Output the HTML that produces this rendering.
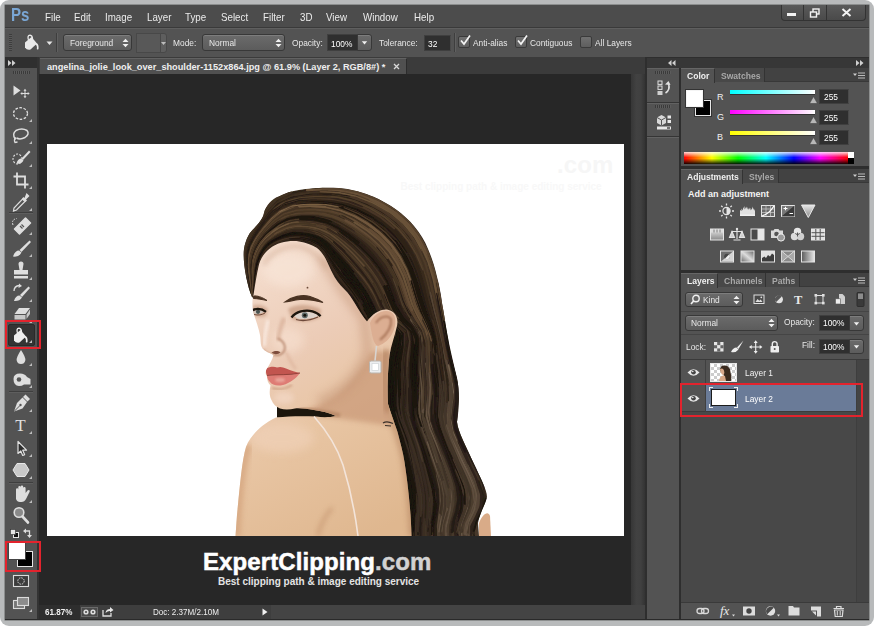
<!DOCTYPE html>
<html><head><meta charset="utf-8"><title>Photoshop</title>
<style>
*{box-sizing:border-box;margin:0;padding:0}
html,body{width:874px;height:626px;overflow:hidden;background:#fff}
body{font-family:"Liberation Sans","DejaVu Sans",sans-serif;font-size:10px;color:#e6e6e6;position:relative}
.a{position:absolute}
.t{position:absolute;white-space:nowrap;transform-origin:0 50%;transform:scaleX(.93);line-height:12px;font-size:9px;color:#e8e8e8}
.b{font-weight:bold}
#frame{left:0;top:0;width:874px;height:626px;background:#b8babb;border-radius:9px}
#win{left:5px;top:5px;width:864px;height:615px;background:#535353;overflow:hidden;box-shadow:0 0 0 .5px rgba(40,40,40,.6)}
/* everything inside #win positioned using page coords minus 5 -> use wrapper shift */
#w{position:absolute;left:-5px;top:-5px;width:874px;height:626px}
#menubar{left:5px;top:5px;width:864px;height:23px;background:#4c4c4c;border-bottom:1px solid #3a3a3a}
.mi{position:absolute;top:10px;font-size:10.5px;line-height:14px;color:#ebebeb;white-space:nowrap;transform-origin:0 50%;transform:scaleX(.93)}
#ps{left:11px;top:5px;font-size:17.5px;line-height:21px;font-weight:bold;color:#7aa6d4;position:absolute;transform-origin:0 50%;transform:scaleX(.86)}
#optbar{left:5px;top:28px;width:864px;height:30px;background:#535353;border-top:1px solid #5f5f5f;border-bottom:1px solid #2f2f2f}
.dd{position:absolute;background:linear-gradient(#6b6b6b,#5c5c5c);border:1px solid #383838;border-radius:3px;box-shadow:inset 0 1px 0 #7d7d7d}
.fld{position:absolute;background:#2f2f2f;border:1px solid #3f3f3f;border-right-color:#4a4a4a}
.cb{position:absolute;width:12px;height:12px;background:linear-gradient(#707070,#5e5e5e);border:1px solid #3a3a3a;border-radius:2px}
.ud{position:absolute;width:7px;height:10px}
</style></head><body>
<div id="frame" class="a"></div>
<div id="win" class="a"><div id="w">
  <div id="menubar" class="a"></div>
  <div id="ps">Ps</div>
  <div class="mi" style="left:45px">File</div>
  <div class="mi" style="left:74px">Edit</div>
  <div class="mi" style="left:105px">Image</div>
  <div class="mi" style="left:147px">Layer</div>
  <div class="mi" style="left:185px">Type</div>
  <div class="mi" style="left:221px">Select</div>
  <div class="mi" style="left:263px">Filter</div>
  <div class="mi" style="left:300px">3D</div>
  <div class="mi" style="left:326px">View</div>
  <div class="mi" style="left:363px">Window</div>
  <div class="mi" style="left:414px">Help</div>
  <!-- window buttons -->
  <div class="a" style="left:781px;top:5px;width:85px;height:16px;background:linear-gradient(#5a5a5a,#4a4a4a);border:1px solid #333;border-top:none;border-radius:0 0 4px 4px"></div>
  <div class="a" style="left:803px;top:5px;width:1px;height:15px;background:#333"></div>
  <div class="a" style="left:826px;top:5px;width:1px;height:15px;background:#333"></div>
  <div class="a" style="left:787px;top:13px;width:9px;height:3px;background:#f2f2f2"></div>
  <svg class="a" style="left:809px;top:8px" width="12" height="10" viewBox="0 0 12 10"><rect x="4" y="1" width="6" height="5" fill="none" stroke="#f2f2f2" stroke-width="1.4"/><rect x="1.5" y="4" width="6" height="5" fill="#4e4e4e" stroke="#f2f2f2" stroke-width="1.4"/></svg>
  <svg class="a" style="left:841px;top:8px" width="11" height="9" viewBox="0 0 11 9"><path d="M1.5 1 L9.5 8 M9.5 1 L1.5 8" stroke="#f4f4f4" stroke-width="1.9"/></svg>

  <div id="optbar" class="a"></div>
  <!-- options content -->
  <div class="a" style="left:9px;top:34px;width:3px;height:17px;background:repeating-linear-gradient(#3d3d3d 0 1px,#5a5a5a 1px 2px)"></div>
  <svg class="a" style="left:22.300px;top:34px" width="20" height="18" viewBox="0 0 20 18">
    <path d="M3 8.5 L9.5 3 L15 9.5 L8.5 15.5 Q5 16.5 3 13.5 Z" fill="#e9e9e9"/>
    <path d="M6.5 6 Q5 1.5 8 1.2 Q10.5 1.5 10.5 5" fill="none" stroke="#e9e9e9" stroke-width="1.3"/>
    <path d="M14.5 9 Q17 10 16.5 15 Q15.6 16.2 14.8 15 Q15.5 11.5 13 10 Z" fill="#e9e9e9"/>
  </svg>
  <svg class="a" style="left:46px;top:40.500px" width="7" height="5" viewBox="0 0 7 5"><path d="M0.500 0.500H6.500L3.500 4Z" fill="#e6e6e6"/></svg>
  <div class="a" style="left:56px;top:33px;width:1px;height:19px;background:#3e3e3e;box-shadow:1px 0 0 #606060"></div>
  <div class="dd" style="left:63px;top:34px;width:69px;height:17px"></div>
  <div class="t" style="left:70px;top:37px">Foreground</div>
  <svg class="ud" style="left:122px;top:38px" viewBox="0 0 7 10"><path d="M0.5 4L3.5 0.8L6.5 4ZM0.5 6L3.5 9.2L6.5 6Z" fill="#f0f0f0"/></svg>
  <div class="a" style="left:136px;top:33px;width:25px;height:20px;background:#585858;border:1px solid #484848"></div>
  <div class="a" style="left:160px;top:33px;width:7px;height:20px;background:#5e5e5e;border:1px solid #484848;border-radius:0 3px 3px 0"></div>
  <svg class="a" style="left:161px;top:42px" width="5" height="3" viewBox="0 0 5 3"><path d="M0 0H5L2.5 3Z" fill="#bdbdbd"/></svg>
  <div class="t" style="left:173px;top:37px">Mode:</div>
  <div class="dd" style="left:202px;top:34px;width:83px;height:17px"></div>
  <div class="t" style="left:209px;top:37px">Normal</div>
  <svg class="ud" style="left:275px;top:38px" viewBox="0 0 7 10"><path d="M0.5 4L3.5 0.8L6.5 4ZM0.5 6L3.5 9.2L6.5 6Z" fill="#f0f0f0"/></svg>
  <div class="t" style="left:292px;top:37px">Opacity:</div>
  <div class="fld" style="left:327px;top:34px;width:31px;height:17px"></div>
  <div class="t" style="left:331px;top:38px;color:#fff">100%</div>
  <div class="dd" style="left:357px;top:34px;width:15px;height:17px;border-radius:0 3px 3px 0"></div>
  <svg class="a" style="left:361px;top:41px" width="7" height="4" viewBox="0 0 7 4"><path d="M0.800 0.300H6.200L3.500 3.500Z" fill="#f0f0f0"/></svg>
  <div class="t" style="left:379px;top:37px">Tolerance:</div>
  <div class="fld" style="left:424px;top:35px;width:27px;height:16px"></div>
  <div class="t" style="left:428px;top:38px;color:#fff">32</div>
  <div class="a" style="left:454px;top:33px;width:1px;height:19px;background:#3e3e3e;box-shadow:1px 0 0 #606060"></div>
  <div class="cb" style="left:458px;top:36px"></div>
  <svg class="a" style="left:459px;top:34px" width="13" height="12" viewBox="0 0 13 12"><path d="M2 6.5L5 10L11 1.5" fill="none" stroke="#f4f4f4" stroke-width="1.7"/></svg>
  <div class="t" style="left:473px;top:37px">Anti-alias</div>
  <div class="cb" style="left:515px;top:36px"></div>
  <svg class="a" style="left:516px;top:34px" width="13" height="12" viewBox="0 0 13 12"><path d="M2 6.5L5 10L11 1.5" fill="none" stroke="#f4f4f4" stroke-width="1.7"/></svg>
  <div class="t" style="left:530px;top:37px">Contiguous</div>
  <div class="cb" style="left:580px;top:36px"></div>
  <div class="t" style="left:595px;top:37px">All Layers</div>
  <!-- document area -->
  <div class="a" style="left:37px;top:57px;width:610px;height:562px;background:#2b2b2b"></div>
  <div class="a" style="left:39px;top:57px;width:606px;height:17px;background:#3b3b3b"></div>
  <div class="a" style="left:39px;top:74px;width:606px;height:531px;background:#272727"></div>
  <!-- doc tab -->
  <div class="a" style="left:40px;top:58px;width:367px;height:16px;background:#505050;border-top:1px solid #626262;border-right:1px solid #2c2c2c"></div>
  <div class="t b" style="left:47px;top:61px;font-size:9.2px;transform:none;color:#eee">angelina_jolie_look_over_shoulder-1152x864.jpg @ 61.9% (Layer 2, RGB/8#) *</div>
  <svg class="a" style="left:393px;top:63px" width="7" height="7" viewBox="0 0 7 7"><path d="M1 1L6 6M6 1L1 6" stroke="#d8d8d8" stroke-width="1.3"/></svg>
  <!-- vertical scrollbar -->
  <div class="a" style="left:631px;top:74px;width:14px;height:531px;background:linear-gradient(90deg,#363636,#424242 40%,#404040 70%,#333)"></div>
  <!-- status bar -->
  <div class="a" style="left:39px;top:605px;width:606px;height:14px;background:#444"></div>
  <div class="a" style="left:39px;top:605px;width:232px;height:14px;background:#3e3e3e"></div><div class="a" style="left:39px;top:605px;width:41px;height:14px;background:#2e2e2e"></div>
  <div class="t b" style="left:45px;top:606px;font-size:8.5px;transform:scaleX(.95);color:#f0f0f0">61.87%</div>
  <div class="a" style="left:81px;top:607px;width:17px;height:10px;background:#4a4a4a;border:1px solid #6a6a6a"></div>
  <svg class="a" style="left:82px;top:608px" width="15" height="8" viewBox="0 0 15 8"><circle cx="4" cy="4" r="2.6" fill="#ddd"/><circle cx="11" cy="4" r="2.6" fill="#ddd"/><circle cx="4" cy="4" r="1" fill="#444"/><circle cx="11" cy="4" r="1" fill="#444"/></svg>
  <svg class="a" style="left:102px;top:606px" width="12" height="11" viewBox="0 0 12 11"><path d="M1 4V10H9V7" fill="none" stroke="#ddd" stroke-width="1.3"/><path d="M3.5 7Q4 3 8 3V1L11.5 4L8 6.5V5Q5.5 5 3.5 7Z" fill="#e6e6e6"/></svg>
  <div class="t" style="left:153px;top:606px;font-size:8.5px;transform:scaleX(.95);color:#eee">Doc: 2.37M/2.10M</div>
  <svg class="a" style="left:262px;top:608px" width="6" height="8" viewBox="0 0 6 8"><path d="M0.5 0.5V7.5L5.5 4Z" fill="#f0f0f0"/></svg>
  <!-- canvas -->
  <div class="a" style="left:47px;top:144px;width:577px;height:392px;background:#fff;overflow:hidden" id="canvas">
<svg class="a" style="left:0;top:0" width="577" height="392" viewBox="47 144 577 392">
  <defs>
    <linearGradient id="hairg" gradientUnits="userSpaceOnUse" x1="250" y1="200" x2="480" y2="520"><stop offset="0" stop-color="#3f3020"/><stop offset=".3" stop-color="#30251b"/><stop offset=".6" stop-color="#2a2019"/><stop offset="1" stop-color="#46382b"/></linearGradient>
    <linearGradient id="sking" gradientUnits="userSpaceOnUse" x1="250" y1="250" x2="400" y2="520"><stop offset="0" stop-color="#f5dfd0"/><stop offset=".35" stop-color="#ecccb7"/><stop offset=".6" stop-color="#e8c5a3"/><stop offset="1" stop-color="#dfb78f"/></linearGradient>
    <filter id="b1" x="-20%" y="-20%" width="140%" height="140%"><feGaussianBlur stdDeviation="1"/></filter>
    <filter id="b15" x="-30%" y="-30%" width="160%" height="160%"><feGaussianBlur stdDeviation="1.600"/></filter>
    <filter id="b2" x="-30%" y="-30%" width="160%" height="160%"><feGaussianBlur stdDeviation="2.500"/></filter>
    <filter id="b4" x="-40%" y="-40%" width="180%" height="180%"><feGaussianBlur stdDeviation="5"/></filter>
    <filter id="b05" x="-10%" y="-10%" width="120%" height="120%"><feGaussianBlur stdDeviation=".55"/></filter>
    <clipPath id="hairclip"><path id="hairp" d="M252 297C247 285 242.500 262 244 249C246 238 250 232 254 228.500C258 224 263 219 264 213C266 205 272 199 278.500 196.500C285 193 292 191 299 190C308 188.500 318 187.700 324.500 187.700C333 187.500 341 188 347.500 189C356 190.500 366 193.500 373 196.500C381 200 389 204.500 396 209.500C403 214.500 409 220 414 226C420 233 425 241 428 249C432 258 435 268 437 277C439.500 286 441 295 442 303C444 313 445.500 324 447.200 333.500C450 350 454 365 457 378C460 392 459 410 457 422C458 432 466 446 474 464C480 477 487 490 487 497C486 503 480 512 478 523L479 536H408C408 515 407 492 402 460C398 440 390 425 384 408L336 420L277 417.500L277 406L290 400L290 330Z"/></clipPath>
    <clipPath id="skinclip"><path id="skinp" d="M259 264.500C262 254 270 246 281 242.700C287 241 294 240.500 299 241.400C306 242.500 312 244.500 316.700 247.800C321 251 324.500 256 327 261.800C330 268 332 273 334.600 277.200C338 283 343 288 347.400 292.500C351 297 354.500 303 357.600 308C361 313.500 364 318 367 321.500C372 314 380 309 387 309.500C396 311.500 398.500 318 397 326C395 336 391 345 389.500 355C388 368 387 390 388 404C391 414 395 424 397.500 432C400 442 403 452 404.500 462C409 492 411 515 411.500 536H235.500L237 515C240 485 242 460 246 447C250 436 262 424 276 417.500C290 416 303 416 316 416.500C322 417.500 330 417.500 336 416C330 413 322 411 314 410C307 409 300 408 295 408.500C290 409.500 285 410 280 408.500C276 407 273 404 271.500 400C269 396 269.500 390 270.500 385.500C268 383 267 380 267 376.500C265 374 265.500 371 267 368.500C270 364 272.500 359 273.500 355C270 353 265 351.500 262.500 348.500C260 345 261 340 260 335C259 329 256 321 253.500 313C252 306 252 300 253.500 295C255 285 256.500 275 259 264.500Z"/></clipPath>
  </defs>
  <g filter="url(#b05)">
    <!-- hair -->
    <use href="#hairp" fill="url(#hairg)"/>
    <g clip-path="url(#hairclip)">
      <!--HAIRSTART--><g fill="none" stroke-linecap="round" stroke-linejoin="round" filter="url(#b05)">
<path d="M257.1 270.2L259.2 264.0L262.2 257.2L266.4 250.6L271.8 246.0L278.5 243.4L286.7 241.7L296.0 241.1L305.7 242.6L314.7 246.4L321.3 252.2L326.0 259.3" stroke="#2e2218" stroke-width="1.2"/>
<path d="M331.1 268.4L335.3 276.0L340.8 283.7L347.1 291.4L353.2 299.2L358.4 307.2L362.9 315.4L370.4 321.6L383.5 324.6L394.1 329.6" stroke="#30241a" stroke-width="1.9"/>
<path d="M395.2 335.1L391.9 350.7L388.1 367.9L387.7 383.1L388.1 395.1L388.2 404.7L390.3 415.1L394.6 427.6L399.3 441.8L402.8 456.8L405.3 472.2L407.9 487.3L409.7 501.3L410.7 513.8" stroke="#1a130e" stroke-width="1.5"/>
<path d="M255.1 278.5L256.7 271.1L258.6 264.8L261.5 258.1L265.6 251.4L270.9 246.5L277.4 243.6L285.3 241.6L294.4 240.5L304.2 241.5" stroke="#3c2d1f" stroke-width="2.0"/>
<path d="M302.4 240.9L311.9 243.7L319.7 248.9L325.0 256.0L328.9 263.7L332.9 271.3L338.0 278.7" stroke="#261d14" stroke-width="1.2"/>
<path d="M336.2 276.7L342.3 284.1L348.6 291.7L354.4 299.8L359.1 308.3L363.4 316.4L371.6 322.1L385.3 325.0" stroke="#211812" stroke-width="2.2"/>
<path d="M376.6 323.4L389.9 326.5L395.0 335.4L391.7 351.1L388.8 368.3L389.1 383.5L389.3 395.4L388.8 405.0L390.4 415.3L394.7 427.9" stroke="#1f1711" stroke-width="2.2"/>
<path d="M401.5 450.3L404.4 465.6L407.5 480.9L410.5 495.5L412.3 508.7L412.9 520.4L412.5 530.9" stroke="#1a130e" stroke-width="2.8"/>
<path d="M255.8 274.6L257.5 267.9L259.7 261.5L263.1 254.5L267.7 248.4L273.6 244.5L280.8 242.2" stroke="#36291c" stroke-width="1.4"/>
<path d="M275.3 244.0L282.9 241.9L291.8 240.7L301.5 241.1L311.1 243.8L319.0 248.7L324.5 255.3L328.7 262.7L332.7 270.3L337.4 278.0L343.2 285.7L349.6 293.4" stroke="#2b2017" stroke-width="1.4"/>
<path d="M354.3 297.2L359.6 305.5L363.7 314.0L370.3 320.8L382.8 324.2L394.3 328.9L395.5 340.8L391.6 357.6L390.1 374.2L390.5 388.4L390.0 399.2L390.0 408.7L392.8 419.9L397.6 433.1" stroke="#1a130e" stroke-width="2.7"/>
<path d="M395.5 427.8L400.5 441.9L404.6 456.9L407.7 472.2L409.9 487.4L410.9 501.3L411.4 513.9L411.8 525.0L412.3 535.0" stroke="#1a130e" stroke-width="1.9"/>
<path d="M254.7 279.7L256.2 271.8L258.0 265.4L260.6 258.7L264.4 251.8L269.5 246.4L275.8 243.1L283.6 240.9L292.6 239.6L302.5 240.1" stroke="#392b1e" stroke-width="1.8"/>
<path d="M313.4 243.4L320.9 248.9L326.1 256.0L330.2 263.7L334.5 271.4L340.0 278.8L346.5 286.3L353.1 294.1L358.7 302.4L362.9 311.1L368.1 318.8L378.9 323.3L391.9 326.9L396.8 336.3" stroke="#34271b" stroke-width="2.6"/>
<path d="M391.4 357.8L390.2 374.4L391.3 388.6L391.6 399.5L391.9 409.1L394.4 420.3L398.4 433.4L402.3 447.8L406.0 463.0L409.8 478.4L412.7 493.2L413.9 506.6" stroke="#1a130e" stroke-width="2.7"/>
<path d="M256.0 271.5L257.8 265.0L260.4 258.3L264.2 251.4L269.4 246.0L275.8 242.6L283.6 240.4" stroke="#34271b" stroke-width="2.2"/>
<path d="M283.5 240.4L292.6 239.0L302.6 239.5L312.4 242.4L320.4 247.4L326.0 254.0L330.7 261.3L335.3 268.9L340.7 276.6L346.9 284.6L353.2 292.6L358.9 300.9" stroke="#1a130e" stroke-width="1.5"/>
<path d="M368.0 316.7L377.3 322.2L390.3 325.7L397.2 333.4L394.6 348.1L391.0 365.3L391.3 380.9L392.4 393.7L392.4 403.7L393.5 413.9L396.9 426.0" stroke="#1a130e" stroke-width="1.9"/>
<path d="M395.5 421.2L400.5 434.5L404.3 448.8L407.0 463.9L409.3 479.2L411.3 493.9L413.0 507.2L414.1 519.1L414.6 529.7L414.7 539.2" stroke="#1a130e" stroke-width="1.9"/>
<path d="M252.3 293.1L254.1 281.4L255.6 273.0L257.1 266.3L259.5 259.7L263.1 252.7L267.9 246.8L274.1 243.0L281.6 240.5" stroke="#32251a" stroke-width="2.5"/>
<path d="M292.5 238.5L302.5 238.9L312.5 241.8L320.5 247.0L326.2 253.9L330.8 261.2L335.7 268.5L341.3 276.1L347.8 283.9L354.1 292.1L359.6 300.6" stroke="#302419" stroke-width="1.5"/>
<path d="M364.5 309.3L369.5 317.5L379.7 322.6L392.8 326.5L399.0 335.5L396.2 350.8L392.6 367.8L391.9 383.0L391.8 395.2L391.8 405.0L394.3 415.6L399.3 428.2L404.0 442.1L407.4 456.7" stroke="#1a130e" stroke-width="2.2"/>
<path d="M405.7 453.6L409.7 468.8L413.0 484.1L414.8 498.4L415.0 511.2L414.5 522.6L414.3 532.8" stroke="#1a130e" stroke-width="1.5"/>
<path d="M255.8 271.3L257.6 264.8L260.3 258.1L264.2 251.2L269.3 245.7L275.7 242.3L283.4 239.7L292.5 238.2L302.6 238.6L312.6 241.6L320.7 246.7L326.5 253.3" stroke="#372a1d" stroke-width="2.6"/>
<path d="M334.1 264.6L339.5 272.1L345.8 279.9L352.2 288.1L358.1 296.5L363.1 305.3" stroke="#291f16" stroke-width="1.6"/>
<path d="M369.6 315.8L378.4 321.8L391.3 325.6L398.6 333.3L397.1 347.9L393.9 365.0" stroke="#1a130e" stroke-width="1.2"/>
<path d="M392.3 390.2L391.9 400.8L393.0 410.6L397.1 422.4L402.3 435.8L406.4 450.2L409.3 465.1L411.7 480.4L413.4 495.0L414.6 508.2" stroke="#1a130e" stroke-width="1.5"/>
<path d="M416.1 508.3L416.9 520.0L417.0 530.5" stroke="#1c150f" stroke-width="1.7"/>
<path d="M255.6 271.5L257.2 264.9L259.8 258.2L263.7 251.3L268.8 245.8L275.1 242.2L282.8 239.5L291.8 237.6" stroke="#36281c" stroke-width="2.4"/>
<path d="M290.1 238.4L300.0 238.0L310.2 240.0L319.1 244.4L325.4 250.8L330.3 258.4L335.0 266.1L340.5 273.7L347.0 281.4L353.9 289.3L359.9 297.6" stroke="#1e1610" stroke-width="2.3"/>
<path d="M363.7 304.8L368.2 313.6L375.5 320.5L388.1 324.5L397.9 330.6L397.3 343.5L393.2 360.3L392.6 376.6L393.8 390.4L394.0 401.1L394.6 411.0L397.4 422.5L401.4 435.7" stroke="#1a130e" stroke-width="2.6"/>
<path d="M401.8 436.2L405.2 450.5L408.4 465.6L412.0 480.9L415.1 495.5L416.6 508.6L416.5 520.3L415.8 530.7" stroke="#1d1510" stroke-width="1.8"/>
<path d="M252.4 291.8L254.0 280.4L255.4 272.1L257.0 265.4L259.5 258.8L263.2 251.8L268.1 246.0L274.3 242.1L281.9 239.3" stroke="#433323" stroke-width="1.8"/>
<path d="M290.0 237.7L300.0 237.5L310.4 239.7L319.3 244.0L325.8 250.2L331.0 257.3L336.1 264.8" stroke="#2b2017" stroke-width="1.3"/>
<path d="M341.4 271.4L347.8 279.3L354.3 287.7L360.2 296.3L365.1 305.2L369.7 314.1L377.8 320.7L390.6 324.9" stroke="#1a130e" stroke-width="1.4"/>
<path d="M397.0 328.6L398.8 339.9L394.6 356.2L392.9 372.9L394.0 387.3L394.7 398.7L395.1 408.6L397.5 419.7L401.4 432.6L405.1 446.6L408.5 461.5L412.3 476.8L415.7 491.7L417.4 505.2" stroke="#1a130e" stroke-width="2.2"/>
<path d="M416.9 514.1L416.2 525.2L415.7 535.2" stroke="#3a2e24" stroke-width="2.4"/>
<path d="M253.7 282.2L255.0 273.4L256.5 266.5L258.7 259.9L262.1 252.8L266.8 246.6" stroke="#2b2017" stroke-width="1.6"/>
<path d="M274.1 241.5L281.7 238.5L290.7 236.5L300.9 236.3L311.5 238.7L320.4 243.3L326.9 249.5L332.4 256.6L338.0 264.1L344.0 271.9L350.6 280.1L357.1 288.6L362.9 297.4L367.6 306.5" stroke="#1a130e" stroke-width="2.2"/>
<path d="M371.3 314.8L380.0 321.2L392.9 325.5L401.0 333.4L399.6 347.8L395.8 364.7L394.8 380.3L394.8 393.2L394.6 403.5L396.4 413.8L401.1 426.1L406.1 439.7L409.8 454.0L412.5 468.9" stroke="#1a130e" stroke-width="2.2"/>
<path d="M416.6 494.0L417.2 507.3L417.5 519.1L417.8 529.6L418.6 539.2" stroke="#34291f" stroke-width="1.9"/>
<path d="M253.7 281.7L254.9 273.0L256.4 266.0L258.6 259.4L262.2 252.3L267.0 246.3L273.1 242.2L280.5 239.2L289.2 236.9L299.1 236.1" stroke="#433223" stroke-width="2.7"/>
<path d="M305.4 236.9L315.5 240.3L323.3 245.9L329.2 252.7L334.6 260.0L340.3 267.5L346.8 275.3L353.5 283.6L359.7 292.2L364.9 301.2L369.2 310.5L375.4 318.4" stroke="#1a130e" stroke-width="2.5"/>
<path d="M372.5 315.7L382.1 321.7L394.8 326.2L401.6 335.1L398.9 350.0L395.1 366.8" stroke="#1a130e" stroke-width="1.9"/>
<path d="M394.6 366.9L395.0 382.3L396.1 394.9L396.5 405.1L398.2 415.6L401.8 427.9L405.6 441.5L408.9 455.9L412.5 471.0L416.2 486.2L418.8 500.3L419.4 512.9L418.8 524.0L418.0 534.1" stroke="#241c15" stroke-width="2.0"/>
<path d="M254.7 272.8L256.1 265.9L258.4 259.3L261.9 252.2L266.7 246.0L272.7 241.7L280.0 238.4L288.8 235.9L298.9 235.2L309.7 237.1" stroke="#34271c" stroke-width="2.7"/>
<path d="M314.6 239.6L322.8 244.8L328.9 251.4L334.4 258.6L340.1 266.2L346.4 274.2L353.1 282.5L359.4 291.1" stroke="#1a130e" stroke-width="1.4"/>
<path d="M367.6 304.2L372.3 313.3L380.4 320.4L392.8 325.0L401.3 332.4L399.8 346.1L395.8 362.9L395.4 378.8L396.6 392.2L397.1 402.8" stroke="#1a130e" stroke-width="2.0"/>
<path d="M396.7 412.1L400.1 423.9L404.9 437.3L409.5 451.6L413.5 466.4L416.9 481.7L418.9 496.2L418.9 509.2L418.3 520.8L418.1 531.1" stroke="#392d23" stroke-width="2.6"/>
<path d="M255.7 267.3L257.8 260.7L261.0 253.6L265.4 247.1L271.1 242.3L278.2 238.9L286.7 236.3L296.5 235.1L307.3 236.3L317.4 239.8L325.1 245.3L331.1 252.0L336.9 259.5L342.9 267.3" stroke="#281e15" stroke-width="2.0"/>
<path d="M353.3 279.4L360.0 288.0L366.0 296.9L370.8 306.3L375.9 315.3L385.5 321.6" stroke="#1a130e" stroke-width="1.6"/>
<path d="M400.0 329.5L402.2 341.6L398.6 358.0L396.7 374.3L396.6 388.5L396.2 399.6L396.9 409.6L400.5 421.2L405.7 434.3L410.1 448.3L413.2 462.8L415.8 478.0" stroke="#1a130e" stroke-width="2.6"/>
<path d="M419.3 496.1L420.6 509.1L420.4 520.6L419.6 531.0" stroke="#352a20" stroke-width="2.7"/>
<path d="M252.5 289.6L253.8 278.6L255.0 270.5L256.6 263.8L259.3 257.0L263.1 250.0L268.3 244.4L274.7 240.4L282.4 237.3L291.6 235.2" stroke="#2a1f16" stroke-width="2.5"/>
<path d="M310.6 236.5L320.1 240.7L327.2 246.9L332.9 254.2L338.6 262.0L344.9 269.8L351.9 277.8L358.9 286.1L365.1 295.0L369.8 304.5L374.1 313.9L382.5 320.8" stroke="#1a130e" stroke-width="1.9"/>
<path d="M394.4 324.9L402.6 332.6L402.4 346.6L399.5 363.3L399.0 379.1L399.1 392.4L398.2 402.9L399.0 413.2L403.0 425.3" stroke="#1a130e" stroke-width="2.4"/>
<path d="M409.6 443.8L412.6 458.0L415.3 473.0L418.1 488.1L420.1 502.1L421.0 514.4" stroke="#3b2f24" stroke-width="2.4"/>
<path d="M253.9 276.7L255.0 268.9L256.8 262.3L259.7 255.3L263.9 248.4L269.3 243.1L275.9 239.3L284.0 236.2L293.5 234.3L304.3 234.7L315.0 237.7L323.5 242.8L330.0 249.3L336.0 256.5" stroke="#1a130e" stroke-width="2.1"/>
<path d="M345.4 267.6L352.1 275.9L358.8 284.6L365.0 293.5L370.1 302.9L374.7 312.4L382.6 319.8" stroke="#1a130e" stroke-width="1.9"/>
<path d="M396.7 326.1L403.5 335.1L401.8 350.0L398.7 366.7L398.2 382.1L398.0 394.7L397.7 404.9L399.7 415.6L404.5 428.1L409.6 441.7" stroke="#362b21" stroke-width="2.5"/>
<path d="M413.8 458.4L417.7 473.4L420.6 488.5L421.5 502.4L420.9 514.7L420.3 525.6L420.5 535.5" stroke="#3d3025" stroke-width="1.8"/>
<path d="M253.2 283.1L254.3 273.8L255.6 266.6L257.6 259.9L260.9 252.8L265.4 246.3L271.3 241.6L278.5 238.2L287.1 235.5L297.1 234.2L308.0 235.4L318.2 238.8L326.0 244.3" stroke="#251b13" stroke-width="1.9"/>
<path d="M321.3 240.7L328.3 247.1L334.2 254.3L340.4 261.8L347.1 269.6L354.2 277.7L361.0 286.4L366.7 295.6L371.1 305.4" stroke="#1a130e" stroke-width="2.3"/>
<path d="M374.9 310.5L382.0 318.6L393.6 324.0L403.0 331.1L403.1 344.0L399.2 360.5L398.4 376.6L399.7 390.5L400.2 401.6" stroke="#1a130e" stroke-width="1.9"/>
<path d="M401.0 400.6L401.0 410.7L403.5 422.2L407.7 435.2L411.8 449.0L415.8 463.5L420.1 478.7L423.3 493.5L424.0 506.8L423.0 518.5" stroke="#342920" stroke-width="2.6"/>
<path d="M421.2 518.1L420.5 528.7L420.9 538.4" stroke="#241b15" stroke-width="2.6"/>
<path d="M253.4 280.5L254.4 271.8L255.7 264.8L258.1 258.0L261.7 250.9L266.7 244.9L272.9 240.6L280.3 237.2L289.2 234.4L299.5 233.5L310.7 235.2L320.4 239.4L327.7 245.6" stroke="#1a130e" stroke-width="1.9"/>
<path d="M333.8 251.7L340.0 259.4L346.4 267.6L353.3 276.0L360.1 284.6L366.4 293.6L371.5 303.1" stroke="#1a130e" stroke-width="1.3"/>
<path d="M377.7 315.1L387.5 321.5L399.3 327.0L404.5 337.1L401.5 352.3L398.4 368.9L398.6 384.0L399.3 396.3L399.9 406.6L402.4 417.6" stroke="#1a130e" stroke-width="2.2"/>
<path d="M404.1 425.8L408.8 439.1L413.2 453.2L417.4 467.9L421.2 483.1L423.2 497.6L423.0 510.4L421.9 521.7" stroke="#362a21" stroke-width="1.5"/>
<path d="M423.4 514.6L422.2 525.6L421.5 535.5" stroke="#2a2019" stroke-width="2.4"/>
<path d="M253.0 283.6L254.0 274.1L255.2 266.7L257.1 260.0L260.3 252.8L264.8 246.2L270.6 241.3L277.8 237.7L286.3 234.7L296.2 233.2L307.4 233.9L317.9 237.1" stroke="#1a130e" stroke-width="2.2"/>
<path d="M327.3 244.0L333.8 250.8L340.1 258.3L346.7 266.5L353.6 274.9L360.4 283.7L366.6 292.7L371.8 302.2L376.4 311.9" stroke="#1a130e" stroke-width="1.4"/>
<path d="M381.4 317.3L392.5 323.2L402.7 329.7L404.4 341.8L400.6 358.0L399.1 374.3L400.1 388.6" stroke="#1a130e" stroke-width="2.7"/>
<path d="M401.7 395.3L401.0 405.6L402.0 416.2L405.8 428.6L410.5 442.1L414.8 456.2L419.1 471.1" stroke="#392d23" stroke-width="1.6"/>
<path d="M417.0 464.8L421.2 480.0L424.1 494.7L424.4 507.9L423.2 519.5L422.2 529.9L422.6 539.6" stroke="#342920" stroke-width="1.5"/>
<path d="M251.8 294.0L253.0 281.5L253.9 272.4L255.1 265.2L257.2 258.3L260.6 251.1L265.4 244.7L271.5 240.1L278.8 236.4L287.6 233.3L297.9 231.8" stroke="#1a130e" stroke-width="2.7"/>
<path d="M295.7 232.6L306.9 233.5L317.6 236.9L325.8 242.3L332.5 248.9L338.9 256.2L345.7 264.0L352.9 272.3" stroke="#1a130e" stroke-width="2.8"/>
<path d="M362.3 281.8L368.7 290.9L373.8 300.8L378.1 310.9L385.3 319.1L396.8 324.8L404.6 332.8L404.5 346.6L402.1 363.2L402.2 379.0L402.7 392.5L401.7 403.2" stroke="#3a2c20" stroke-width="1.7"/>
<path d="M401.9 396.1L401.1 406.4L403.0 417.3L407.8 429.9L413.0 443.4L417.1 457.5L420.6 472.3L423.3 487.3L424.3 501.4L424.1 513.7L423.7 524.7L424.1 534.7" stroke="#372b21" stroke-width="2.4"/>
<path d="M252.7 284.1L253.6 274.3L254.7 266.8L256.6 260.0L259.7 252.9L264.2 246.2L269.9 241.1L276.9 237.1L285.2 233.7L295.2 231.7" stroke="#1a130e" stroke-width="2.3"/>
<path d="M289.9 232.9L300.5 232.0L311.9 233.9L321.8 238.2L329.2 244.4L335.7 251.6" stroke="#1a130e" stroke-width="2.5"/>
<path d="M331.9 246.0L338.6 253.2L345.7 260.9L353.1 269.1L360.3 277.8L366.8 287.0L372.2 296.8L376.4 307.1" stroke="#2d2118" stroke-width="1.4"/>
<path d="M373.8 300.2L378.2 310.3L385.7 318.6L397.3 324.5L406.1 332.6L405.6 346.1L402.0 362.5L401.2 378.3L402.0 391.9L402.2 402.9" stroke="#33271d" stroke-width="1.3"/>
<path d="M405.5 421.9L409.5 434.8L413.4 448.4L417.3 462.8L421.7 477.9L425.2 492.8L426.3 506.1L425.3 517.9L423.9 528.5L423.7 538.2" stroke="#3b2f24" stroke-width="2.6"/>
<path d="M253.8 271.7L255.0 264.5L257.2 257.6L260.7 250.5L265.6 244.2L271.8 239.5L279.2 235.8L288.0 232.6L298.5 231.1" stroke="#1a130e" stroke-width="1.2"/>
<path d="M301.8 230.8L313.4 232.8L323.2 237.1L330.8 243.4L337.6 250.7L344.6 258.5L352.1 266.6" stroke="#281e15" stroke-width="2.6"/>
<path d="M357.8 272.1L364.7 281.3L370.7 290.9L375.6 301.0L380.3 311.1L388.3 319.2L399.8 325.3L407.3 334.2" stroke="#392b1e" stroke-width="1.5"/>
<path d="M404.6 358.0L403.5 374.2L403.6 388.5L402.9 400.0L402.9 410.3L406.1 421.9L411.5 434.9" stroke="#34291f" stroke-width="2.1"/>
<path d="M413.4 438.7L417.3 452.3L420.3 466.6L423.3 481.7L425.5 496.3L426.3 509.3L426.2 520.7" stroke="#2f251c" stroke-width="1.3"/>
<path d="M253.2 277.3L254.0 269.1L255.5 262.1L258.2 255.1L262.2 248.1L267.5 242.3L274.1 238.0L282.0 234.3L291.3 231.5" stroke="#1a130e" stroke-width="2.5"/>
<path d="M296.5 231.1L308.0 232.0L318.9 235.1L327.4 240.2L334.6 246.8L341.5 254.4L348.6 262.6L355.8 271.3L362.9 280.2L369.4 289.4L374.8 299.3L379.3 309.5L386.3 318.1L397.4 324.3" stroke="#392b1e" stroke-width="1.4"/>
<path d="M406.5 341.4L404.2 357.4L403.5 373.7L404.2 388.1L403.6 399.8L403.1 410.0L405.6 421.4L410.5 434.4L415.4 448.0L419.7 462.2L423.6 477.2L426.2 492.1L426.4 505.5L425.4 517.4" stroke="#2b2119" stroke-width="2.1"/>
<path d="M252.2 287.9L253.0 276.9L253.9 268.7L255.3 261.8L257.9 254.6L261.9 247.5L267.3 241.7L274.0 237.3L281.9 233.6L291.4 230.8L302.6 230.3" stroke="#34271b" stroke-width="2.5"/>
<path d="M315.6 232.7L325.2 237.1L332.8 243.3L340.0 250.7L347.2 258.8L354.5 267.4L361.9 276.2L368.8 285.4L374.6 295.1L379.2 305.5L384.7 315.2L394.7 322.2" stroke="#523e2b" stroke-width="2.1"/>
<path d="M401.9 326.2L408.4 335.9L407.2 350.6L404.8 367.0L404.5 382.3L404.4 395.1" stroke="#271e16" stroke-width="1.6"/>
<path d="M408.5 421.5L413.0 434.3L416.8 447.6L419.8 461.6L423.2 476.5L426.6 491.5L428.4 505.0L428.4 516.9L427.5 527.5L427.4 537.3" stroke="#362b21" stroke-width="2.0"/>
<path d="M252.7 278.1L253.5 269.5L254.8 262.4L257.2 255.4L261.1 248.2L266.3 242.2L272.8 237.5L280.5 233.5L289.7 230.2L300.8 229.1" stroke="#2b2017" stroke-width="1.8"/>
<path d="M308.7 230.6L319.7 234.1L328.3 239.6L335.5 246.4L342.7 253.9L350.3 261.9L358.0 270.3" stroke="#382a1d" stroke-width="1.2"/>
<path d="M350.3 261.5L358.1 269.9L365.6 278.8L372.1 288.3L377.1 298.6L381.3 309.2L388.2 318.0L399.2 324.5L407.2 332.8L407.7 346.6" stroke="#392b1e" stroke-width="1.4"/>
<path d="M408.7 342.9L405.4 358.8L404.4 374.9L405.6 389.2L406.1 400.8L406.8 411.4L409.9 423.1" stroke="#443629" stroke-width="2.1"/>
<path d="M411.0 430.1L416.2 443.4L420.2 457.2L423.6 471.8L426.4 486.9L427.6 500.9L427.4 513.3L427.0 524.3" stroke="#372c22" stroke-width="2.4"/>
<path d="M252.3 283.7L253.0 273.8L253.9 266.1L255.7 259.1L258.8 251.9L263.2 245.0L268.9 239.5L276.0 235.1L284.4 231.4L294.6 229.1L306.5 229.5L318.1 232.2" stroke="#382a1d" stroke-width="2.2"/>
<path d="M311.5 230.0L322.3 233.5L330.8 239.1L338.4 246.0L345.9 254.0L353.5 262.5L361.2 271.3L368.5 280.4L374.8 290.1L379.7 300.6L384.3 311.2L392.4 319.6" stroke="#56412d" stroke-width="2.3"/>
<path d="M409.4 336.4L407.3 351.1L404.6 367.5L405.0 382.8L405.9 395.6L406.2 406.4" stroke="#251c15" stroke-width="1.3"/>
<path d="M406.2 413.6L409.6 425.5L414.7 438.7L419.4 452.3L423.7 466.5L427.6 481.6" stroke="#362b21" stroke-width="2.4"/>
<path d="M428.6 503.0L428.5 515.1L428.1 525.9L428.5 535.8" stroke="#392d23" stroke-width="2.6"/>
<path d="M253.7 266.7L255.3 259.7L258.2 252.4L262.5 245.4L268.1 239.8L275.1 235.3L283.4 231.4L293.3 228.8L305.2 228.7L317.0 231.1L326.7 235.5L334.7 241.6L342.4 249.0L350.1 257.3" stroke="#3a2c1e" stroke-width="1.8"/>
<path d="M352.0 259.5L359.6 268.3L367.0 277.5L373.6 287.0L379.0 297.3L383.5 308.1L390.3 317.4L400.9 324.3L408.4 332.9L408.3 346.5" stroke="#3c2d20" stroke-width="1.3"/>
<path d="M409.8 346.0L407.2 362.1L406.6 377.9L406.7 391.7L406.0 402.8L406.8 413.5L411.0 425.6L416.4 438.7L420.7 452.1L424.1 466.2L427.2 481.3L429.3 495.9" stroke="#2f251c" stroke-width="1.6"/>
<path d="M431.0 509.9L429.2 521.2L427.9 531.4" stroke="#251c15" stroke-width="1.4"/>
<path d="M252.8 273.9L253.7 266.1L255.4 259.1L258.4 251.8L262.8 244.9L268.6 239.3" stroke="#32261a" stroke-width="1.8"/>
<path d="M272.0 236.9L279.6 232.6L288.8 229.0L300.0 227.6L312.3 228.9L323.2 232.7L331.8 238.4" stroke="#372a1d" stroke-width="1.5"/>
<path d="M334.3 241.9L342.0 249.2L349.7 257.4L357.3 266.1L364.7 275.3L371.4 284.8L377.1 294.8L381.7 305.5L387.6 315.3L397.7 322.5L407.2 330.1L408.7 342.3L405.9 358.2L405.4 374.4" stroke="#291f16" stroke-width="2.7"/>
<path d="M407.4 399.5L406.9 410.0L409.7 421.5L415.0 434.4L420.0 447.8L424.0 461.6L427.6 476.3L430.2 491.3L430.6 504.8L429.8 516.7L429.1 527.3" stroke="#3e3227" stroke-width="1.2"/>
<path d="M251.9 287.6L252.4 276.5L253.1 268.1L254.6 261.0L257.2 253.9L261.2 246.7L266.5 240.7L273.1 235.8" stroke="#4b3927" stroke-width="1.9"/>
<path d="M291.6 228.0L303.4 227.5L315.6 229.6L325.9 233.7L334.2 239.4L342.3 246.5" stroke="#3e2f21" stroke-width="2.2"/>
<path d="M346.6 251.5L354.6 260.0L362.3 269.1L369.4 278.5L375.6 288.5L380.7 299.0" stroke="#423222" stroke-width="2.2"/>
<path d="M383.2 303.1L388.6 313.5L397.9 321.4L407.7 329.1L410.3 340.7L407.9 356.3L407.3 372.5L408.9 387.2L409.3 399.3L409.0 410.0L410.9 421.4L415.0 434.0L419.1 447.3L423.1 461.1" stroke="#46372a" stroke-width="2.5"/>
<path d="M423.0 463.0L426.9 477.9L430.6 492.8L432.1 506.2L431.5 517.9L430.2 528.4L430.1 538.2" stroke="#32281e" stroke-width="2.7"/>
<path d="M251.4 295.6L252.1 282.3L252.5 272.5L253.5 264.8L255.3 257.8L258.6 250.5L263.2 243.7L269.0 238.1L276.2 233.4L284.8 229.3L295.3 226.9L307.7 227.3L319.6 230.3L329.0 235.1" stroke="#4f3c29" stroke-width="2.5"/>
<path d="M326.0 233.7L334.3 239.6L342.4 246.6L350.7 254.5L358.9 263.1L366.4 272.4L373.1 282.2" stroke="#503c2a" stroke-width="1.6"/>
<path d="M373.9 281.9L379.8 292.2L384.2 303.3L389.5 313.8L398.9 321.7L408.4 329.6L410.8 341.5L409.0 357.2" stroke="#4a3928" stroke-width="1.5"/>
<path d="M408.1 368.1L408.1 383.2L408.1 396.1L408.0 406.9L410.2 418.1L415.1 430.7L419.9 443.8L423.4 457.2L426.6 471.6L429.8 486.7L431.6 500.8L431.7 513.2L431.1 524.1" stroke="#3a2e23" stroke-width="2.7"/>
<path d="M252.3 275.2L252.9 266.9L254.4 259.8L257.1 252.4L261.3 245.3L266.8 239.3" stroke="#523e2b" stroke-width="2.7"/>
<path d="M262.3 243.7L268.1 238.0L275.2 233.2L283.7 229.0L294.1 226.2L306.5 226.1L318.8 228.4" stroke="#34271b" stroke-width="2.4"/>
<path d="M317.2 229.0L327.2 233.5L335.6 239.5L343.9 246.6L352.4 254.6L360.7 263.3L368.2 272.7L374.8 282.7L380.2 293.3L384.6 304.5L390.6 314.6L400.6 322.4L409.8 330.6" stroke="#413222" stroke-width="2.0"/>
<path d="M408.9 329.4L411.2 341.3L409.4 356.9L409.2 373.1L410.7 387.7L410.6 399.8" stroke="#30251c" stroke-width="1.6"/>
<path d="M410.3 416.7L414.1 429.0L419.0 442.1L423.6 455.6L428.2 469.9L432.3 484.9L434.1 499.3L433.0 511.8L431.1 522.8" stroke="#251c15" stroke-width="1.5"/>
<path d="M252.7 268.0L254.0 260.8L256.5 253.6L260.5 246.4L265.9 240.2L272.5 235.2L280.3 230.5L289.8 226.9" stroke="#5b4530" stroke-width="1.7"/>
<path d="M307.9 225.8L320.1 228.6L329.8 233.5L338.2 240.0L346.8 247.5L355.4 255.7" stroke="#463525" stroke-width="1.8"/>
<path d="M363.0 263.6L370.4 273.2L376.9 283.4L382.3 294.2L386.8 305.4L393.2 315.5L403.4 323.4L411.6 332.3L412.4 345.5L409.6 361.4L409.3 377.2" stroke="#35281c" stroke-width="2.8"/>
<path d="M409.4 388.5L409.5 400.4L410.1 411.2L413.5 423.0L418.5 435.9L422.5 449.0L425.6 462.6" stroke="#251c15" stroke-width="2.6"/>
<path d="M430.1 472.2L434.0 487.3L435.2 501.3L433.7 513.5L431.9 524.4L431.6 534.4" stroke="#1a130e" stroke-width="1.4"/>
<path d="M251.4 295.7L251.9 282.3L252.3 272.4L253.1 264.6L255.0 257.6L258.2 250.2L262.7 243.3L268.6 237.6" stroke="#523e2b" stroke-width="1.9"/>
<path d="M269.2 237.0L276.5 232.2L285.3 228.1L296.1 225.8L308.8 226.2L320.8 229.0L330.5 233.6L339.0 239.9L347.6 247.5L356.1 256.1L364.1 265.3" stroke="#5e4831" stroke-width="2.6"/>
<path d="M378.8 284.9L383.7 296.0L388.0 307.4L395.1 317.1L405.5 324.9L413.0 334.6L413.0 348.6L410.7 364.6" stroke="#3a2c1f" stroke-width="2.6"/>
<path d="M410.4 362.9L410.0 378.5L410.7 392.3L410.6 403.7L411.9 414.7L416.0 426.9L420.8 439.9" stroke="#271e17" stroke-width="2.7"/>
<path d="M421.8 446.6L425.0 460.1L428.8 474.7L432.7 489.7L434.7 503.5L434.3 515.5L432.9 526.1" stroke="#1a130e" stroke-width="1.7"/>
<path d="M252.0 275.5L252.5 267.0L253.8 259.8L256.4 252.4L260.5 245.2L266.0 239.0L272.8 233.9" stroke="#4c3a28" stroke-width="2.6"/>
<path d="M277.8 230.9L286.9 226.8L298.2 224.7L311.1 225.3L323.0 228.3L332.5 233.5L341.2 240.3" stroke="#54402c" stroke-width="1.6"/>
<path d="M340.2 239.2L348.9 247.1L357.5 255.8L365.7 265.0L373.3 274.6L379.9 284.8L385.2 295.8L389.7 307.3L396.6 317.2" stroke="#483726" stroke-width="2.2"/>
<path d="M403.2 322.8L411.6 331.6L412.6 344.5L411.0 360.4L411.5 376.3L412.8 390.5L412.2 402.2L411.7 412.9L414.4 424.7L419.0 437.6L423.7 450.8L428.2 464.6L433.0 479.5" stroke="#211913" stroke-width="2.7"/>
<path d="M436.0 504.2L435.5 516.1L434.5 526.7L434.7 536.6" stroke="#1b140f" stroke-width="2.8"/>
<path d="M251.3 294.0L251.6 280.9L251.9 271.2L252.7 263.4L254.6 256.2L257.9 248.8L262.6 241.9L268.6 236.0L275.9 230.9L284.7 226.4" stroke="#56412d" stroke-width="2.2"/>
<path d="M302.2 224.1L315.2 225.5L326.4 229.2L335.6 234.9L344.3 242.1L353.2 250.4L361.8 259.2L370.0 268.5" stroke="#3f3021" stroke-width="2.7"/>
<path d="M385.6 294.9L390.2 306.5L397.1 316.6L406.9 324.8L413.4 334.6L413.0 348.5L411.2 364.6L412.2 380.1L413.6 393.7L413.4 405.1L414.0 416.1" stroke="#1b140f" stroke-width="2.6"/>
<path d="M416.5 427.9L421.2 440.8L425.7 454.0L430.4 468.0L435.1 483.0L437.5 497.6L436.6 510.3L434.3 521.4L433.1 531.6" stroke="#1d1610" stroke-width="1.7"/>
<path d="M251.4 293.6L251.6 280.6L251.9 270.9L252.8 263.2L254.7 256.1L258.1 248.7L262.9 241.9L269.0 236.1L276.3 231.0L285.1 226.4L296.1 223.9" stroke="#4a3827" stroke-width="1.4"/>
<path d="M297.3 223.5L310.4 224.0L322.6 227.1L332.4 232.1L341.3 238.8L350.4 246.5L359.5 255.0L368.1 264.1L375.7 273.9L382.0 284.5L386.7 296.0L391.1 307.7L398.3 317.6" stroke="#513e2a" stroke-width="2.3"/>
<path d="M410.3 327.7L414.6 338.9L413.9 354.0L413.4 370.0L414.4 385.0L414.1 397.7L413.0 408.6L414.4 420.0" stroke="#1a130e" stroke-width="1.2"/>
<path d="M420.8 437.0L425.7 450.0L430.3 463.6L434.9 478.4L437.8 493.2L437.6 506.5L435.5 518.1L434.1 528.5L435.1 538.3" stroke="#201812" stroke-width="2.2"/>
<path d="M252.1 267.1L253.4 259.8L256.0 252.5L260.0 245.2L265.3 238.8L272.0 233.3L279.9 228.3L289.7 224.4L302.0 223.2L315.2 224.8L326.5 228.5" stroke="#513d2a" stroke-width="2.1"/>
<path d="M338.9 236.4L347.9 244.0L356.8 252.6L365.3 261.8L373.1 271.4L380.0 281.6L385.6 292.6L390.0 304.3L396.1 315.0" stroke="#513d2a" stroke-width="2.3"/>
<path d="M405.7 322.7L414.0 332.0L415.9 345.1L413.7 360.7L413.1 376.4L413.8 390.6L413.6 402.4L414.4 413.4L418.2 425.6L423.3 438.4" stroke="#1a130e" stroke-width="1.7"/>
<path d="M424.0 441.3L427.4 454.2L430.9 468.1L435.2 483.1L438.4 497.6L438.7 510.3L437.2 521.4L435.9 531.6" stroke="#231b14" stroke-width="2.7"/>
<path d="M252.1 267.0L253.4 259.7L256.0 252.3L260.0 245.0L265.4 238.6L272.0 233.1L280.0 228.1L289.8 224.3L302.2 223.1L315.4 224.7" stroke="#453424" stroke-width="1.9"/>
<path d="M328.0 228.7L337.4 234.2L346.8 241.2L356.2 249.5L364.9 258.6L372.7 268.5L379.6 278.8L385.3 289.8L389.9 301.5L395.6 312.7L404.7 321.6L413.3 330.7L415.4 343.2" stroke="#34271b" stroke-width="2.8"/>
<path d="M413.5 360.2L414.2 376.0L415.8 390.3L415.5 402.2L415.0 413.2L417.5 425.0L421.9 437.8L426.3 450.7L430.8 464.3L435.9 479.2L439.5 494.0L439.4 507.2L437.0 518.6L435.1 529.0" stroke="#251c15" stroke-width="1.7"/>
<path d="M437.2 517.7L435.6 528.1L435.6 538.0" stroke="#2a2019" stroke-width="2.6"/>
<path d="M251.2 296.4L251.4 282.5L251.5 272.2L252.1 264.1L253.7 256.9L256.9 249.5L261.4 242.4L267.3 236.3L274.3 230.8" stroke="#483626" stroke-width="2.3"/>
<path d="M282.3 225.8L292.9 222.2L306.0 221.7L319.3 223.8L330.2 228.1L339.6 234.1L349.3 241.4L358.9 249.7L368.0 258.8L376.0 268.7L382.7 279.3L388.0 290.8" stroke="#5a452f" stroke-width="1.4"/>
<path d="M384.6 286.4L389.2 298.1L394.1 309.7L402.4 319.3L411.9 328.0L416.6 339.6L415.0 354.5L413.5 370.4L414.1 385.3" stroke="#1a130e" stroke-width="2.7"/>
<path d="M415.5 409.3L416.8 420.8L420.8 433.3L425.1 446.1L429.4 459.4L434.3 473.7L438.9 488.8L440.4 502.7L438.6 514.7L436.1 525.4L435.5 535.3" stroke="#2b2119" stroke-width="2.7"/>
<path d="M251.3 274.1L251.7 265.6L253.0 258.2L255.8 250.7L260.1 243.5L265.7 237.2L272.6 231.6L280.7 226.3L290.9 222.4L303.7 221.1L317.3 222.7L328.7 226.6" stroke="#644d35" stroke-width="2.0"/>
<path d="M338.0 232.5L347.5 239.8L357.0 248.2L366.2 257.2L374.5 266.8L381.8 277.1L387.5 288.3L391.8 300.5L396.9 312.1L405.6 321.4L414.2 330.6L416.8 343.3" stroke="#221912" stroke-width="1.6"/>
<path d="M417.2 335.8L416.8 349.9L414.9 365.7L415.3 381.0L416.2 394.6L416.2 406.0L417.7 417.4L421.9 429.9L426.4 442.6L429.8 455.4" stroke="#1a130e" stroke-width="1.9"/>
<path d="M437.0 474.6L440.2 489.6L440.8 503.4L439.4 515.3L438.0 525.9L438.6 535.8" stroke="#584839" stroke-width="2.3"/>
<path d="M251.2 288.5L251.2 276.7L251.5 267.6L252.5 260.1L254.8 252.7L258.6 245.2L263.9 238.6L270.5 232.8L278.3 227.5L287.9 223.1" stroke="#6f573c" stroke-width="2.3"/>
<path d="M299.4 221.6L313.0 222.3L325.3 225.3L335.4 230.2L345.0 236.9L354.6 245.1L363.7 254.2L372.1 263.9L379.7 274.0L386.1 284.8" stroke="#3f2f21" stroke-width="1.6"/>
<path d="M387.1 285.8L391.9 297.8L397.0 309.6L405.0 319.6L413.8 328.8L417.0 340.6L415.5 355.7L415.3 371.6L417.1 386.5" stroke="#1a130e" stroke-width="1.8"/>
<path d="M417.2 407.8L418.0 419.2L422.2 431.7L427.4 444.5L432.1 457.5L436.9 471.5L441.1 486.5L442.4 500.7L440.6 512.9" stroke="#3b2f24" stroke-width="2.7"/>
<path d="M251.0 272.8L251.4 264.5L252.8 257.1L255.7 249.5L260.0 242.2L265.8 235.7L272.8 229.9L281.2 224.6L291.8 220.8L305.1 219.9L318.8 221.5L330.4 225.0L340.6 230.5" stroke="#4e3b29" stroke-width="2.0"/>
<path d="M341.4 232.8L351.4 240.3L361.4 248.8L370.6 258.1L378.7 268.1L385.4 278.9" stroke="#241a13" stroke-width="1.7"/>
<path d="M384.2 274.6L390.2 286.0L394.6 298.5L399.5 310.6L407.6 320.6L416.0 330.3L418.6 342.8L418.0 358.1L418.5 373.9L419.7 388.5L419.0 400.8" stroke="#1a130e" stroke-width="1.6"/>
<path d="M418.9 409.1L419.9 420.6L423.8 433.0L428.2 445.7L432.5 458.7L437.6 472.8L442.5 487.9L444.2 501.9L442.3 513.9L439.5 524.6L438.6 534.6" stroke="#4f4032" stroke-width="2.2"/>
<path d="M251.1 269.2L251.8 261.4L253.8 254.0L257.4 246.5L262.4 239.6L268.7 233.5L276.2 227.9L285.3 222.9" stroke="#70583d" stroke-width="2.0"/>
<path d="M295.6 220.2L309.3 220.0L322.6 222.4L333.4 226.9L343.3 233.3L353.4 241.1L363.2 249.9L372.3 259.3L380.3 269.4L387.0 280.3L392.0 292.3" stroke="#34271b" stroke-width="1.8"/>
<path d="M393.4 301.6L399.2 313.0L408.4 322.4L416.3 332.2L418.1 345.4L416.1 360.8L415.9 376.5L416.8 390.7L416.8 402.7L417.5 413.9L421.2 426.1" stroke="#1a130e" stroke-width="1.8"/>
<path d="M427.4 442.2L431.6 454.9L436.4 468.6L441.6 483.6L444.6 498.1L443.5 510.6L440.6 521.7L438.9 531.8" stroke="#655544" stroke-width="1.4"/>
<path d="M250.9 276.9L251.0 267.7L251.9 260.0L254.1 252.5L257.8 245.0L263.0 238.1L269.5 232.0" stroke="#4c3a28" stroke-width="2.8"/>
<path d="M277.9 226.1L287.5 221.4L299.9 219.1L314.1 219.7L326.7 222.6L337.3 227.6L347.4 234.5" stroke="#36291c" stroke-width="2.5"/>
<path d="M340.2 230.8L350.4 238.0L360.6 246.4L370.1 255.6L378.4 265.6L385.3 276.4L390.8 288.2L395.0 300.7" stroke="#1a130e" stroke-width="2.6"/>
<path d="M399.5 306.6L406.7 317.6L415.4 327.3L419.8 339.0L418.8 353.6L418.1 369.3L419.7 384.4L420.8 397.5L420.5 409.0L422.0 420.7L425.9 433.2" stroke="#1c140f" stroke-width="2.7"/>
<path d="M430.5 447.1L434.8 459.9L439.1 474.1L442.6 489.1L443.1 503.0L441.4 514.9" stroke="#413428" stroke-width="1.6"/>
<path d="M250.8 279.9L250.7 269.9L251.4 261.9L253.2 254.5L256.5 246.9L261.3 239.8L267.4 233.4L274.8 227.4L283.7 222.2L295.3 219.1L309.3 218.9L322.8 221.2" stroke="#4a3826" stroke-width="1.6"/>
<path d="M334.4 226.1L344.6 232.3L355.1 240.1L365.3 248.8L374.5 258.4L382.3 268.8L388.7 280.1L393.5 292.4L397.9 305.0L404.6 316.2L413.7 325.8L419.8 337.0L420.0 351.4L419.0 367.0" stroke="#291e16" stroke-width="2.5"/>
<path d="M420.0 379.8L420.2 393.6L419.3 405.3L420.2 416.7L424.7 429.2L430.1 442.0L434.4 454.5L438.1 467.9L442.0 482.8L444.3 497.3L443.8 510.0L442.1 521.1" stroke="#584939" stroke-width="2.0"/>
<path d="M250.8 281.1L250.7 270.8L251.1 262.6L252.8 255.2L256.0 247.6L260.7 240.5L266.8 234.1L274.0 228.1L282.6 222.5" stroke="#5a442f" stroke-width="2.8"/>
<path d="M300.2 218.9L314.4 219.5L327.0 222.4L337.7 227.2L348.0 234.0L358.4 242.4" stroke="#1a130e" stroke-width="2.4"/>
<path d="M364.2 245.3L373.6 255.0L381.8 265.4L388.9 276.3L394.6 288.3L399.0 301.2L404.6 313.3L413.0 323.5L419.2 334.1L420.3 347.8L419.8 363.4L421.3 378.8L422.7 392.9" stroke="#30241a" stroke-width="1.5"/>
<path d="M421.8 396.5L421.1 408.1L421.9 419.6L425.5 432.0L429.9 444.6L434.1 457.3L439.0 471.2L444.2 486.2L446.6 500.4L444.9 512.7L441.9 523.4L440.5 533.4" stroke="#3f3327" stroke-width="1.4"/>
<path d="M250.5 278.9L250.4 269.0L251.0 261.0L252.9 253.5L256.4 246.0L261.2 238.7L267.4 232.2" stroke="#503d2a" stroke-width="1.9"/>
<path d="M270.3 230.4L278.2 224.4L288.1 219.6L301.1 217.3L315.6 218.1L328.3 221.3L339.1 226.5L349.7 233.4L360.4 241.8L370.5 251.0L379.4 260.9L386.9 271.7L392.8 283.5L397.2 296.3" stroke="#2a1f16" stroke-width="1.5"/>
<path d="M415.9 327.1L420.5 338.8L419.6 353.3L418.8 368.9L420.4 384.0L421.4 397.3L421.2 408.8L422.7 420.5L426.7 433.0" stroke="#32271e" stroke-width="1.9"/>
<path d="M434.0 451.3L437.9 464.3L442.0 478.9L444.8 493.8L444.7 506.9L443.0 518.4L441.7 528.6L443.2 538.5" stroke="#423529" stroke-width="1.9"/>
<path d="M250.9 293.2L250.5 279.7L250.2 269.6L250.8 261.5L252.5 254.0L255.8 246.3L260.6 239.0L266.7 232.3L274.1 226.1L283.0 220.5" stroke="#211912" stroke-width="1.6"/>
<path d="M287.5 219.2L300.5 216.7L315.1 217.3L328.1 220.3L339.0 225.3L349.8 232.3L360.7 240.6L370.9 249.8L379.9 259.8L387.5 270.6L393.6 282.4L398.0 295.4L402.6 308.2" stroke="#2c2117" stroke-width="1.9"/>
<path d="M411.1 319.7L419.1 330.1L422.3 342.8L421.0 357.7L420.7 373.2L422.0 387.9L422.4 400.6L422.6 412.1L425.3 424.2L430.0 436.8L433.9 449.1L437.3 461.8" stroke="#5f4f3e" stroke-width="2.3"/>
<path d="M443.4 481.6L447.3 496.3L447.2 509.1L444.7 520.2L442.6 530.4" stroke="#4e3f31" stroke-width="2.4"/>
<path d="M250.7 283.6L250.3 272.5L250.5 263.9L251.9 256.4L254.8 248.8L259.1 241.4L264.9 234.7L271.8 228.4L280.1 222.4L290.7 217.9L304.5 216.6L319.0 218.1L331.2 221.7" stroke="#1c140f" stroke-width="1.8"/>
<path d="M341.6 226.1L352.8 233.1L363.7 241.8L373.4 251.5L381.8 262.1L388.9 273.2L394.7 285.2L399.4 298.1L404.8 310.6" stroke="#35281c" stroke-width="2.6"/>
<path d="M413.0 321.9L420.0 332.6L421.3 345.8L420.6 361.1L421.8 376.6L423.7 391.0" stroke="#2c2119" stroke-width="1.3"/>
<path d="M423.2 406.2L423.1 417.7L426.4 430.0L431.3 442.6L436.0 455.1L441.0 468.5L446.3 483.5L448.9 498.0L447.2 510.5L444.1 521.5L442.4 531.6" stroke="#5f4f3f" stroke-width="1.9"/>
<path d="M250.6 285.9L250.1 274.2L250.2 265.2L251.2 257.5L253.7 249.9L257.8 242.3" stroke="#2a1f16" stroke-width="1.7"/>
<path d="M267.5 231.5L275.0 225.2L284.2 219.7L296.4 216.6L311.0 216.6L324.8 218.9" stroke="#1a130e" stroke-width="1.9"/>
<path d="M334.9 221.5L345.9 227.5L357.3 235.1L368.3 243.9L378.0 253.8L386.1 264.5L392.7 276.1" stroke="#483626" stroke-width="1.2"/>
<path d="M393.5 278.4L398.3 291.2L402.7 304.4L409.4 316.2L417.8 326.7L423.2 338.7L423.4 353.1L422.8 368.6L423.5 383.6L423.4 396.9L422.7 408.5" stroke="#503f2e" stroke-width="2.0"/>
<path d="M422.7 414.1L425.1 426.1L429.9 438.8L434.7 451.3L439.5 464.3L444.9 478.8L448.5 493.7L447.9 506.9" stroke="#4a3c2e" stroke-width="2.5"/>
<path d="M447.9 512.5L444.7 523.3L443.6 533.3" stroke="#46382c" stroke-width="2.7"/>
<path d="M250.4 280.7L250.0 270.3L250.4 261.9L252.0 254.4L255.2 246.8L259.9 239.4" stroke="#382a1d" stroke-width="1.7"/>
<path d="M265.4 232.7L272.7 226.3L281.3 220.3L292.7 216.3L307.1 215.4L321.6 216.9" stroke="#1d150f" stroke-width="2.2"/>
<path d="M316.1 215.8L329.2 218.8L340.4 223.9L351.6 230.8L363.0 239.2L373.4 248.5L382.5 258.7L390.0 269.9L395.9 282.0L400.3 295.2L405.0 308.3L412.5 319.6L420.3 330.3" stroke="#3f3021" stroke-width="1.5"/>
<path d="M423.0 342.1L422.7 357.0L423.5 372.5L425.6 387.3L425.7 400.2L424.7 411.8" stroke="#3f3226" stroke-width="1.8"/>
<path d="M425.1 420.8L429.2 433.3L434.3 445.8L439.1 458.3L444.3 472.0L449.2 487.0L450.5 501.2L448.1 513.2L445.0 523.9L444.2 533.9" stroke="#483a2d" stroke-width="2.0"/>
<path d="M249.8 266.3L250.5 258.4L252.8 250.8L256.6 243.2L261.9 236.0L268.5 229.4L276.3 222.9L286.0 217.4L299.1 214.4L314.2 214.5L328.0 217.0L339.6 221.6L351.0 228.3" stroke="#34271b" stroke-width="2.3"/>
<path d="M355.8 231.7L366.9 240.8L376.7 250.8L385.3 261.4L392.5 272.7L398.4 285.0L402.9 298.4" stroke="#453524" stroke-width="2.4"/>
<path d="M399.0 286.2L403.2 299.8L408.9 312.5L417.0 323.5L423.6 335.0L425.1 348.9L424.6 364.1L425.2 379.4L425.5 393.4L424.6 405.4L425.2 417.0" stroke="#211812" stroke-width="1.6"/>
<path d="M426.5 421.6L430.3 434.1L434.8 446.5L439.1 458.9L444.4 472.8L449.7 487.8L451.5 501.9L449.2 513.8L445.9 524.4L444.8 534.4" stroke="#4c3d2f" stroke-width="2.3"/>
<path d="M249.7 269.7L250.1 261.3L251.8 253.7L255.0 246.1L259.8 238.7L265.9 231.8" stroke="#271d15" stroke-width="1.9"/>
<path d="M271.4 225.8L280.0 219.5L291.1 215.0L305.7 213.6L320.7 214.7L333.6 217.8L345.3 222.9L357.3 230.3" stroke="#473625" stroke-width="1.9"/>
<path d="M369.4 240.3L379.4 250.3L387.7 261.3L394.4 273.2L399.8 285.9L404.2 299.5L410.0 312.3" stroke="#423223" stroke-width="2.1"/>
<path d="M411.8 316.5L419.9 327.4L424.9 339.8L424.8 354.2L424.3 369.6L425.1 384.5L425.3 397.8L424.9 409.5L427.0 421.5L432.0 434.2L436.8 446.6L440.4 458.8L444.4 472.5L448.6 487.5" stroke="#3e3126" stroke-width="1.8"/>
<path d="M450.9 503.7L448.8 515.4L446.8 525.9L447.3 535.8" stroke="#574839" stroke-width="1.6"/>
<path d="M249.9 277.9L249.6 267.9L250.1 259.8L252.1 252.2L255.6 244.5L260.6 237.2L266.8 230.2L274.3 223.5L283.6 217.5L296.0 214.0L311.2 213.8L325.5 215.9L337.6 219.9" stroke="#31251a" stroke-width="2.8"/>
<path d="M341.1 221.3L352.7 228.2L364.4 236.8L375.1 246.3L384.4 256.7L392.1 267.8L398.3 280.1L402.8 293.6L407.3 307.1" stroke="#513e2a" stroke-width="1.5"/>
<path d="M407.1 306.4L414.2 318.3L421.6 329.5L424.8 342.2L424.1 356.9L424.4 372.3L426.3 387.1L427.0 400.1L426.7 411.9L428.7 423.9L432.9 436.5L436.9 448.7L440.8 461.1" stroke="#372b21" stroke-width="1.6"/>
<path d="M451.7 489.6L452.3 503.4L449.3 515.2L446.3 525.6L446.1 535.5" stroke="#605040" stroke-width="2.0"/>
<path d="M250.6 289.0L249.9 276.4L249.7 266.8L250.4 258.8L252.5 251.2L256.1 243.5L261.3 236.2L267.8 229.3" stroke="#2d2118" stroke-width="1.4"/>
<path d="M278.7 220.1L289.5 215.3L303.7 213.5L318.9 214.3L332.1 217.2L343.9 222.0L355.9 229.1L367.6 238.0" stroke="#473625" stroke-width="2.3"/>
<path d="M377.8 247.3L386.7 258.0L394.2 269.4L400.3 281.9L404.9 295.5L409.7 309.1L416.9 320.9L423.6 332.4L425.4 345.6" stroke="#2f2319" stroke-width="2.7"/>
<path d="M426.2 363.4L427.8 378.7L428.7 392.8L427.3 405.0L426.7 416.6L430.1 429.0L435.5 441.7L440.5 453.8L445.4 466.7L450.5 481.4L453.3 496.1" stroke="#635342" stroke-width="1.9"/>
<path d="M453.1 498.6L452.4 511.1L449.6 521.9L447.8 531.9" stroke="#514234" stroke-width="2.7"/>
<path d="M250.8 295.0L250.0 280.8L249.5 270.2L249.8 261.7L251.3 254.0L254.4 246.4L259.1 238.9L265.0 231.8L272.2 225.0L280.9 218.6" stroke="#2c2117" stroke-width="1.7"/>
<path d="M278.5 219.6L289.3 214.6L303.6 212.7L319.0 213.7L332.2 216.7L344.1 221.5L356.3 228.4L368.3 237.2L378.7 247.2L387.4 258.1" stroke="#54402c" stroke-width="1.8"/>
<path d="M393.1 266.5L399.1 278.9L403.6 292.5L408.2 306.2L415.2 318.4L422.7 329.7L426.6 342.7L426.6 357.4" stroke="#594430" stroke-width="1.8"/>
<path d="M427.3 378.5L428.7 392.7L428.6 405.1L429.2 416.9L432.8 429.4L437.5 441.9L441.2 453.8L445.0 466.5L450.2 481.2" stroke="#4d3e31" stroke-width="1.6"/>
<path d="M449.3 478.7L453.7 493.6L453.6 506.8L450.3 518.1L447.3 528.3L447.9 538.2" stroke="#4e3f31" stroke-width="1.7"/>
<path d="M249.3 262.8L250.5 255.0L253.2 247.3L257.5 239.6L263.3 232.3L270.3 225.3" stroke="#57422d" stroke-width="2.7"/>
<path d="M263.6 232.5L270.6 225.6L279.0 219.0L290.0 214.0L304.5 212.0L320.0 212.7L333.3 215.7L345.3 220.9L357.5 228.4L369.3 237.4L379.7 247.4" stroke="#55412d" stroke-width="1.8"/>
<path d="M385.4 252.4L393.3 263.9L399.5 276.3L404.2 289.9L408.7 303.8L415.3 316.5L422.8 328.1" stroke="#59432e" stroke-width="2.3"/>
<path d="M425.2 332.4L428.0 345.9L427.5 360.7L427.9 376.0L429.0 390.4L428.7 403.1L428.9 414.9L432.4 427.3L437.6 440.0" stroke="#443629" stroke-width="2.7"/>
<path d="M442.6 455.3L447.0 468.2L451.5 483.0L453.7 497.6L452.2 510.2L449.6 521.1L448.5 531.1" stroke="#4b3d2f" stroke-width="2.8"/>
<path d="M250.2 286.7L249.4 274.5L249.2 265.1L250.0 257.1L252.2 249.4L256.2 241.6" stroke="#443323" stroke-width="1.2"/>
<path d="M254.9 243.6L260.0 236.1L266.4 229.0L273.9 221.9L283.2 215.5L296.0 211.6L311.7 211.0L326.5 213.0" stroke="#59432e" stroke-width="1.7"/>
<path d="M345.7 220.4L358.2 227.6L370.4 236.5L381.1 246.4L390.0 257.3L397.2 269.2L402.7 282.3L407.0 296.4L412.0 310.0" stroke="#634c34" stroke-width="2.6"/>
<path d="M420.6 323.2L426.1 335.2L427.2 349.0L427.2 364.1L429.2 379.4L431.0 393.6L430.4 405.9L430.2 417.7L433.1 430.1L437.7 442.5L441.9 454.5" stroke="#46382b" stroke-width="2.1"/>
<path d="M453.5 490.5L455.0 504.1L453.1 515.8L450.4 526.1L450.2 536.0" stroke="#423529" stroke-width="1.4"/>
<path d="M248.8 266.2L249.4 258.1L251.5 250.4L255.2 242.6L260.3 235.1L266.8 227.8L274.4 220.6L284.1 214.4L297.4 210.9L313.3 210.6" stroke="#382a1e" stroke-width="2.7"/>
<path d="M340.5 216.1L353.1 222.3L365.8 230.7L377.2 240.6L386.7 251.4L394.8 262.9L401.5 275.2L406.6 288.8L411.1 303.1L417.2 316.2L424.1 328.2L427.5 340.9L427.8 355.4" stroke="#493726" stroke-width="1.2"/>
<path d="M429.4 373.0L430.4 387.7L429.6 400.7L428.7 412.5L431.2 424.7L436.7 437.5" stroke="#625141" stroke-width="1.7"/>
<path d="M446.4 460.6L451.7 474.3L456.1 489.3L456.5 503.1L453.4 514.9L450.4 525.3L450.5 535.2" stroke="#3b2f24" stroke-width="2.6"/>
<path d="M250.5 292.4L249.6 278.7L249.0 268.3L249.2 259.8L250.8 252.1L254.1 244.3L259.0 236.7L265.3 229.4L272.7 222.4L281.8 215.9L294.1 211.6L309.7 210.4L325.0 211.7L338.0 215.2" stroke="#463524" stroke-width="2.5"/>
<path d="M356.6 224.6L369.0 233.6L380.0 243.6L389.3 254.4L397.1 266.0L403.3 278.7" stroke="#473625" stroke-width="2.2"/>
<path d="M407.0 286.9L411.2 301.3L416.9 314.8L423.9 326.9L427.9 339.6L429.1 354.0L430.2 369.2L432.2 384.2L432.4 397.7L430.7 409.7L431.3 421.7" stroke="#463728" stroke-width="2.4"/>
<path d="M431.3 407.4L431.1 419.2L434.5 431.7L439.6 444.1L444.3 456.0L449.7 469.0L455.4 483.8L458.0 498.4L455.8 510.8L451.9 521.6L450.0 531.6" stroke="#392d23" stroke-width="1.9"/>
<path d="M249.1 276.2L248.6 266.2L249.1 258.0L251.1 250.2L254.7 242.4L259.8 234.7L266.3 227.3L274.0 220.0L283.6 213.7L296.9 210.0L313.0 209.5L328.1 211.1L341.1 214.7" stroke="#57422d" stroke-width="1.7"/>
<path d="M354.6 222.3L367.6 230.6L379.4 240.2L389.1 251.0L396.9 262.8L403.1 275.7L407.7 289.7L412.2 304.1L418.6 317.2L425.6 329.3L429.7 342.5L430.1 357.0L430.5 372.2" stroke="#6a5239" stroke-width="2.2"/>
<path d="M432.7 398.4L431.2 410.4L431.8 422.4L436.0 435.0L441.1 447.2L446.0 459.2L451.6 472.6L456.8 487.6L458.1 501.7L455.1 513.6L451.4 524.2L450.5 534.1" stroke="#392d23" stroke-width="1.5"/>
<path d="M248.9 275.8L248.3 265.8L248.7 257.5L250.7 249.7L254.5 241.9L259.7 234.2L266.2 226.7" stroke="#483726" stroke-width="1.6"/>
<path d="M272.7 220.3L282.0 213.6L294.9 209.3L311.1 208.0L326.7 209.3L340.1 212.7L353.1 218.7L366.4 227.0L378.4 236.8L388.6 247.6L397.1 259.1L404.1 271.6L409.3 285.5" stroke="#513d2a" stroke-width="1.5"/>
<path d="M410.9 293.1L415.6 307.6L422.1 320.6L428.0 333.1L429.7 346.7L430.2 361.5L432.2 376.7" stroke="#4f3d2c" stroke-width="2.3"/>
<path d="M433.3 396.0L431.6 408.1L431.9 420.1L436.1 432.7L441.8 445.1L446.7 456.9L451.7 469.9L456.7 484.7L458.5 499.2L456.1 511.5L452.8 522.2L451.7 532.1" stroke="#292018" stroke-width="2.5"/>
<path d="M248.6 272.5L248.2 263.1L249.1 255.0L251.7 247.2L255.9 239.5L261.5 231.9L268.4 224.3L276.5 216.9L287.1 210.8L301.9 207.9" stroke="#3c2d20" stroke-width="1.2"/>
<path d="M310.8 207.9L326.4 209.4L339.8 212.9L352.9 218.6L366.4 226.5L378.9 236.0L389.2 246.8L397.4 258.6" stroke="#5b452f" stroke-width="2.1"/>
<path d="M402.6 267.9L408.3 281.4L412.9 296.0L418.1 310.4L424.7 323.4L429.9 336.2L430.9 350.1L431.1 364.9L433.1 380.1" stroke="#35291d" stroke-width="1.3"/>
<path d="M433.8 395.0L432.2 407.3L432.5 419.3L436.9 432.0L442.7 444.4L447.5 456.1L452.0 468.8L456.8 483.6L459.0 498.1L457.2 510.6L454.1 521.4L452.8 531.4" stroke="#241c15" stroke-width="2.3"/>
<path d="M249.9 287.2L248.8 274.6L248.2 264.8L248.8 256.5L250.9 248.7L254.8 240.9L260.2 233.2L266.9 225.7L274.7 218.2L284.8 211.8L298.8 208.1L315.3 207.6L330.4 209.5" stroke="#523e2b" stroke-width="2.6"/>
<path d="M347.0 215.9L360.2 223.2L373.0 232.4L384.0 242.7L393.3 253.8L401.0 265.8L407.0 279.1L411.4 293.6L416.0 308.2L422.4 321.2L428.3 333.7" stroke="#634c34" stroke-width="2.3"/>
<path d="M431.2 351.9L431.2 366.8L432.7 381.9L433.8 395.8L433.5 408.2L434.6 420.4L438.7 433.1L443.4 445.2L447.0 456.8" stroke="#271e17" stroke-width="1.6"/>
<path d="M444.4 447.9L448.0 459.5L452.4 472.9L457.3 487.9L459.4 502.0L457.6 513.9" stroke="#261e16" stroke-width="1.5"/>
<path d="M248.2 265.6L248.6 257.2L250.6 249.4L254.3 241.5L259.6 233.8L266.2 226.2L273.9 218.8L283.7 212.2L297.3 208.2L313.8 207.4L329.2 209.0L342.5 212.8L355.7 219.2L369.0 227.8" stroke="#413122" stroke-width="1.5"/>
<path d="M392.3 249.5L400.2 261.5L406.4 274.7L411.0 289.2L415.3 304.0L421.4 317.6" stroke="#624b34" stroke-width="1.3"/>
<path d="M422.7 320.1L428.9 332.8L431.9 346.5L432.2 361.1L433.2 376.2L434.1 390.7L433.3 403.5L433.0 415.5" stroke="#362a1f" stroke-width="1.4"/>
<path d="M433.1 415.1L436.3 427.6L442.0 440.3L447.1 452.0L451.4 464.0L456.3 478.1L459.8 493.1" stroke="#291f18" stroke-width="2.4"/>
<path d="M460.4 493.7L460.9 506.8L457.8 518.0L454.8 528.2L455.4 538.1" stroke="#211913" stroke-width="1.4"/>
<path d="M249.0 280.2L248.1 269.1L248.0 260.2L249.4 252.3L252.4 244.4L257.0 236.5L263.0 228.7L270.2 220.9L279.0 213.6" stroke="#433323" stroke-width="2.7"/>
<path d="M311.5 206.2L327.5 207.3L341.3 210.5L354.9 216.2L368.8 224.5L381.2 234.6L391.4 245.7L399.8 257.6L406.7 270.4L412.0 284.6L416.5 299.7L421.9 314.1L428.0 327.3L431.6 340.5" stroke="#634c34" stroke-width="2.2"/>
<path d="M432.4 365.1L434.0 380.2L435.5 394.3L435.2 406.9L435.8 419.1L439.5 431.8L444.2 444.0L447.9 455.5L452.2 468.0L457.8 482.7L461.7 497.4L460.9 509.9L457.5 520.7" stroke="#211913" stroke-width="2.6"/>
<path d="M457.2 518.0L454.8 528.2L456.7 538.1" stroke="#2f241c" stroke-width="2.3"/>
<path d="M248.1 271.1L247.8 261.8L248.9 253.8L251.6 246.0L255.9 238.1L261.6 230.2L268.6 222.3L276.8 214.7L288.1 208.8L303.6 206.2" stroke="#473525" stroke-width="2.4"/>
<path d="M309.3 206.0L325.6 206.8L339.6 209.9L353.1 215.5L366.9 223.6L379.6 233.4L390.2 244.2L399.1 255.8L406.2 268.5L411.6 282.6L415.8 297.8" stroke="#6e563c" stroke-width="2.0"/>
<path d="M420.8 308.6L427.1 322.4L432.7 335.7L434.4 349.7L434.7 364.2L436.0 379.2L437.3 393.5" stroke="#1a130e" stroke-width="2.6"/>
<path d="M436.0 409.8L437.3 422.2L441.6 434.8L446.1 446.8L449.7 458.2L454.4 471.2L460.0 486.1L462.9 500.4L461.2 512.5" stroke="#1a130e" stroke-width="2.0"/>
<path d="M248.4 276.0L247.6 265.7L247.9 257.2L249.8 249.3L253.4 241.3L258.5 233.3L264.9 225.3L272.5 217.4L282.2 210.4" stroke="#664f37" stroke-width="2.1"/>
<path d="M299.3 206.2L316.3 205.6L331.7 207.2L345.4 211.2L359.2 217.8L372.9 226.8L384.8 237.1L394.7 248.4L402.8 260.5" stroke="#71583d" stroke-width="2.4"/>
<path d="M411.7 281.2L416.1 296.4L421.3 311.1L427.8 324.6L433.0 338.0L434.3 352.0L434.6 366.7L436.0 381.7L436.8 395.7" stroke="#1a130e" stroke-width="2.5"/>
<path d="M436.1 409.0L437.3 421.4L442.0 434.2L446.9 446.2L450.7 457.6L454.9 470.3L460.1 485.2" stroke="#292018" stroke-width="1.6"/>
<path d="M463.1 495.9L462.6 508.7L459.6 519.6L457.3 529.6L459.3 539.6" stroke="#221a14" stroke-width="2.4"/>
<path d="M250.2 292.3L248.7 278.3L247.6 267.4L247.6 258.6L249.2 250.7L252.5 242.8L257.4 234.9L263.7 227.0L271.0 219.0L280.1 211.5L292.9 206.3" stroke="#695239" stroke-width="2.7"/>
<path d="M327.2 205.7L341.4 208.6L355.4 214.1L369.8 222.1L382.8 232.1L393.2 243.3L401.6 255.6L408.4 268.7L413.7 283.1L418.2 298.4L423.6 313.2L429.6 326.8L433.7 340.3L434.4 354.4" stroke="#433323" stroke-width="2.3"/>
<path d="M433.2 354.2L434.6 369.2L437.3 384.1L438.3 397.9L437.1 410.3L437.5 422.6L441.3 435.1L446.0 447.1L450.5 458.6L456.3 471.7" stroke="#271e16" stroke-width="1.5"/>
<path d="M455.7 470.0L461.8 484.8L465.2 499.3L463.4 511.5L459.3 522.1L456.9 532.0" stroke="#433529" stroke-width="1.6"/>
<path d="M250.5 295.6L248.9 280.7L247.7 269.3L247.4 260.2L248.5 252.1L251.5 244.1L256.1 236.2L262.1 228.2L269.3 220.2L277.9 212.5" stroke="#5b4530" stroke-width="2.7"/>
<path d="M282.7 209.4L296.8 205.0L314.0 204.0L330.0 205.5L344.0 209.2L358.0 215.4L372.3 223.9" stroke="#503d2a" stroke-width="2.0"/>
<path d="M383.2 231.4L393.8 242.6L402.2 254.9L408.9 268.2L414.1 282.7L418.6 298.1L423.9 312.9L430.0 326.7L434.4 340.3" stroke="#1f1710" stroke-width="2.0"/>
<path d="M434.7 358.0L436.9 372.9L439.3 387.7L439.0 401.1L437.4 413.4L438.7 425.7L443.3 438.3L448.4 450.1L453.5 461.7L459.5 475.3L464.7 490.3L464.9 504.0" stroke="#1c140f" stroke-width="1.7"/>
<path d="M464.0 512.2L460.5 522.8L458.9 532.6" stroke="#3f3327" stroke-width="1.8"/>
<path d="M247.5 268.6L247.3 259.5L248.5 251.4L251.4 243.5L256.1 235.4L262.2 227.4L269.5 219.2L278.3 211.5L290.5 205.8L307.0 203.4L324.2 203.6L339.0 206.1" stroke="#856a4a" stroke-width="2.1"/>
<path d="M339.9 206.7L353.9 212.1L368.4 220.1L381.8 229.8L393.0 240.7L402.1 252.6L409.4 265.6L414.7 280.1L418.8 295.7L423.5 311.0L429.5 324.9L433.8 338.4L435.9 352.6L437.6 367.3" stroke="#1f1710" stroke-width="2.8"/>
<path d="M439.4 387.8L440.0 401.3L439.4 413.7L441.3 426.3L445.6 438.8L449.8 450.3" stroke="#3b2f24" stroke-width="1.8"/>
<path d="M463.8 481.2L468.1 496.0L466.7 508.8L462.1 519.6L458.7 529.6L460.7 539.6" stroke="#4f4032" stroke-width="2.3"/>
<path d="M247.2 267.4L247.0 258.4L248.4 250.3L251.7 242.4L256.5 234.4L262.8 226.2L270.1 217.9L279.1 210.0L292.0 204.4L309.0 202.3L326.1 203.0L340.8 205.8" stroke="#4e3b29" stroke-width="2.4"/>
<path d="M344.6 207.5L358.9 213.7L373.4 222.5L386.1 232.8L396.6 244.1L405.1 256.3" stroke="#4a3827" stroke-width="1.7"/>
<path d="M397.1 243.3L405.2 255.9L411.7 269.5L416.8 284.4L421.3 300.1L426.7 315.1L432.3 329.1L435.9 342.9L436.6 357.1L437.7 371.9" stroke="#1a130e" stroke-width="1.6"/>
<path d="M439.1 375.9L440.2 390.5L439.3 403.6L438.8 415.9L442.1 428.7L447.8 441.3L452.6 452.7L456.7 464.2L461.7 478.2" stroke="#3f3227" stroke-width="1.7"/>
<path d="M453.2 459.0L458.8 472.0L465.1 486.9L467.6 501.1L464.7 513.0L460.1 523.5L458.2 533.4" stroke="#46382b" stroke-width="1.3"/>
<path d="M249.2 286.1L247.6 273.3L246.9 263.3L247.3 254.8L249.5 246.8L253.3 238.7L258.8 230.5L265.5 222.2L273.4 213.8L283.9 206.8" stroke="#55402c" stroke-width="2.0"/>
<path d="M296.5 203.6L314.0 202.5L330.4 203.5L345.0 206.6L359.7 212.5L374.5 221.2L387.3 231.7L397.5 243.3L405.8 255.9L412.5 269.4L417.7 284.3L422.1 300.1L427.3 315.3" stroke="#1b130e" stroke-width="1.5"/>
<path d="M435.8 345.9L437.2 360.3L439.8 375.2L442.2 389.9L441.8 403.2L440.4 415.6L442.2 428.1L446.9 440.5L451.7 452.0L456.8 463.6L463.2 477.4" stroke="#392d23" stroke-width="2.1"/>
<path d="M465.2 509.6L461.8 520.4L459.7 530.3" stroke="#423529" stroke-width="1.7"/>
<path d="M250.1 293.4L248.2 278.8L246.9 267.6L246.7 258.5L248.0 250.3L251.1 242.4" stroke="#6d553b" stroke-width="2.4"/>
<path d="M251.4 242.4L256.3 234.3L262.5 226.1L269.8 217.8L278.8 209.8L291.6 204.1L308.6 201.8L325.9 202.3L340.8 205.0L355.2 210.3L370.1 218.4L383.9 228.2L395.2 239.2" stroke="#36281c" stroke-width="1.3"/>
<path d="M402.5 252.2L409.6 265.3L415.1 279.7L419.7 295.3L424.7 310.6L430.5 324.8L434.9 338.5L436.0 352.5" stroke="#1c150f" stroke-width="1.6"/>
<path d="M441.3 379.2L443.0 393.6L441.8 406.5L440.8 418.9L443.7 431.5L448.7 443.7L453.6 455.0L459.1 467.0L465.5 481.4L469.3 496.2L467.4 508.9L462.6 519.8" stroke="#423529" stroke-width="2.8"/>
<path d="M464.7 517.0L460.5 527.1L461.0 537.1" stroke="#423529" stroke-width="1.4"/>
<path d="M246.5 262.9L246.9 254.4L249.0 246.3L253.0 238.3L258.5 230.1L265.3 221.5L273.1 212.9L283.6 205.4L298.8 201.1L316.8 200.2L333.3 201.6L348.0 205.3" stroke="#302419" stroke-width="2.6"/>
<path d="M340.1 202.9L355.0 207.6L370.6 215.2L385.1 224.8L396.9 236.0L406.0 248.5L413.1 262.0L418.5 276.9L422.8 293.0L427.5 309.0L433.0 323.9L437.7 338.3" stroke="#34271b" stroke-width="2.2"/>
<path d="M438.1 356.2L439.9 370.9L442.7 385.7L443.7 399.6L442.6 412.2L443.5 424.8L447.5 437.4L452.0 449.0L456.3 460.1L462.2 473.2" stroke="#3d3126" stroke-width="2.3"/>
<path d="M458.7 461.6L464.5 474.9L469.5 489.9L469.6 503.7L465.6 515.2L461.6 525.4L461.8 535.3" stroke="#685746" stroke-width="1.5"/>
<path d="M246.4 262.7L246.9 254.2L249.1 246.1L253.0 238.0L258.4 229.6L265.2 221.0L273.1 212.4L283.8 205.1L299.2 201.1" stroke="#3b2d1f" stroke-width="2.6"/>
<path d="M310.7 200.4L328.0 201.2L343.1 204.0L357.9 209.5L373.4 217.6L387.3 227.5L398.5 238.9L407.2 251.5" stroke="#1a130e" stroke-width="2.6"/>
<path d="M410.4 257.6L416.6 271.7L421.5 287.4L426.0 303.6L431.1 318.9L435.9 333.3L438.1 347.3L439.1 361.5L441.4 376.4L443.8 391.0L443.8 404.3" stroke="#231a13" stroke-width="1.6"/>
<path d="M443.9 397.5L443.2 410.3L444.0 422.9L448.0 435.6L452.5 447.4L456.4 458.3L461.5 470.9L467.9 485.7L471.0 500.1L468.7 512.2L464.2 522.6L461.9 532.5" stroke="#403428" stroke-width="1.4"/>
<path d="M246.3 262.7L246.7 254.2L248.9 246.2L252.8 238.1L258.2 229.7L264.9 220.9L272.8 212.2L283.4 204.8L298.8 200.6L316.9 199.7L333.5 200.9L348.5 204.3L364.1 210.5" stroke="#1c150f" stroke-width="2.3"/>
<path d="M375.0 218.1L388.7 228.2L399.8 239.7L408.4 252.3L415.1 266.2L420.0 281.6L424.1 298.0L428.9 313.7L434.3 328.3L438.2 342.4L440.2 356.6L441.9 371.2" stroke="#241b13" stroke-width="2.5"/>
<path d="M443.5 381.9L444.9 396.2L443.5 409.0L443.1 421.5L446.5 434.2L451.5 446.1L456.2 457.2L462.0 469.5L468.6 484.2L471.7 498.8L468.8 511.0L463.8 521.6L461.2 531.5" stroke="#433529" stroke-width="2.5"/>
<path d="M246.5 266.6L246.4 257.5L247.9 249.4L251.1 241.4L255.9 233.1L262.2 224.5L269.5 215.7L278.7 207.6L292.1 202.0L309.6 200.0L327.2 200.4L342.5 202.8L357.7 207.8L373.4 215.7" stroke="#302419" stroke-width="2.0"/>
<path d="M368.2 212.3L383.0 222.0L395.1 233.2L404.7 245.5L412.6 258.6L418.7 273.1L423.4 289.1L427.7 305.5L432.7 320.9L437.0 335.4L438.8 349.4L440.4 363.7L443.3 378.5" stroke="#302419" stroke-width="2.2"/>
<path d="M445.0 393.2L443.4 406.3L442.7 418.7L446.4 431.6L452.3 444.0L457.4 455.0L462.2 466.7L467.8 480.9L471.1 495.8L469.3 508.5L465.2 519.4" stroke="#3e3126" stroke-width="2.6"/>
<path d="M246.8 271.2L246.0 261.3L246.6 252.8L248.9 244.7L253.0 236.5L258.7 227.9L265.6 219.1L273.8 210.3L284.9 203.1" stroke="#3a2c1f" stroke-width="1.9"/>
<path d="M285.3 203.2L301.5 199.4L319.9 198.7L336.4 199.9L351.6 203.6L367.5 210.4L382.8 219.9L395.3 231.1L405.1 243.5" stroke="#261c14" stroke-width="2.2"/>
<path d="M410.1 253.3L417.0 267.2L422.1 282.7L426.4 299.2L431.0 315.2L435.8 330.0L438.4 344.1L440.0 358.2" stroke="#3e2f21" stroke-width="1.5"/>
<path d="M447.0 390.8L445.8 404.2L444.2 416.7L446.6 429.5L452.1 442.0L457.5 453.2L462.7 464.5L468.9 478.3L473.1 493.2L471.9 506.4L467.3 517.5L463.8 527.5L465.5 537.5" stroke="#4b3d2f" stroke-width="2.6"/>
<path d="M248.9 286.3L247.1 273.2L246.1 262.9L246.4 254.3L248.5 246.2L252.3 238.0L257.7 229.5L264.4 220.7L272.3 211.8L282.8 204.3L298.1 199.9L316.4 198.6" stroke="#1b140f" stroke-width="1.9"/>
<path d="M318.4 198.8L335.0 200.1L350.2 203.7L366.0 210.1L381.6 219.2L394.6 230.1L404.6 242.3L412.4 255.6L418.5 270.1L423.3 286.1L427.6 302.6L432.7 318.3" stroke="#2f2319" stroke-width="2.7"/>
<path d="M440.4 342.2L442.3 356.3L444.0 370.7L445.7 385.4L445.7 399.3L444.6 412.1" stroke="#2f241b" stroke-width="1.9"/>
<path d="M444.8 410.8L445.3 423.4L450.1 436.3L456.0 448.1L460.9 458.9L466.3 471.3L471.7 486.1L473.3 500.4L470.0 512.4L465.7 522.8L464.6 532.7" stroke="#4d3e30" stroke-width="1.2"/>
<path d="M249.8 293.0L247.6 278.2L246.1 266.8L245.7 257.5L246.9 249.2L250.0 241.1L254.8 232.7L261.1 224.0" stroke="#261d14" stroke-width="2.6"/>
<path d="M264.3 220.3L272.2 211.3L282.7 203.6L298.2 199.2L316.7 198.1L333.7 199.1L349.1 202.2L365.1 208.3L380.9 217.3L394.2 228.2" stroke="#483626" stroke-width="2.2"/>
<path d="M407.9 243.0L415.9 256.4L422.1 271.2L426.7 287.6L430.7 304.6L435.2 320.7L439.3 335.6" stroke="#30241a" stroke-width="2.2"/>
<path d="M440.7 341.8L442.8 355.8L444.7 370.2L446.5 384.9L446.4 398.9L445.1 411.7L446.5 424.5" stroke="#433529" stroke-width="2.8"/>
<path d="M447.1 425.2L451.1 437.8L455.7 449.3L460.1 460.2L466.1 473.0L472.7 488.0L474.8 502.0L471.2 513.7L466.1 524.0L464.4 533.9" stroke="#5e4e3e" stroke-width="2.1"/>
<path d="M245.8 264.5L245.8 255.5L247.5 247.3L251.0 239.3L256.2 230.8L262.7 222.0L270.3 212.8L280.0 204.4L294.4 198.9L312.8 196.9L330.6 197.6L346.2 200.4L362.0 206.2" stroke="#30241a" stroke-width="2.0"/>
<path d="M380.7 214.9L394.4 225.9L405.1 238.0L413.7 251.1L420.6 265.5L425.8 281.4L429.9 298.5L434.2 315.1L438.5 330.5L441.0 344.9L442.9 358.9" stroke="#382a1d" stroke-width="1.5"/>
<path d="M445.1 371.5L448.2 386.3L449.0 400.3L447.7 413.2L448.4 425.9L452.5 438.5L457.1 449.9L461.8 460.7L468.1 473.6L474.6 488.5L476.3 502.5L472.3 514.2" stroke="#544536" stroke-width="2.2"/>
<path d="M470.6 517.1L466.7 527.1L467.1 537.1" stroke="#524335" stroke-width="1.9"/>
<path d="M245.7 262.2L245.9 253.5L248.0 245.4L251.9 237.1L257.4 228.5L264.2 219.6L272.2 210.5L282.8 202.7L298.5 198.0" stroke="#261c14" stroke-width="2.7"/>
<path d="M308.9 196.1L327.4 195.9L343.7 197.9L359.6 203.0L376.1 211.2L390.9 221.6L402.7 233.3L412.1 246.1" stroke="#3e2f20" stroke-width="1.3"/>
<path d="M413.8 251.4L420.3 265.9L425.0 282.1L429.0 299.1L433.5 315.4L438.2 330.7L441.7 345.2L443.9 359.3L446.2 373.7L447.8 388.4L447.0 402.0" stroke="#382b1f" stroke-width="2.2"/>
<path d="M448.0 414.0L448.9 426.8L453.1 439.3L457.8 450.6L462.5 461.4L469.0 474.5L475.4 489.5L476.6 503.3L472.3 514.8L467.2 525.0L466.1 534.8" stroke="#6a5948" stroke-width="1.6"/>
<path d="M247.3 277.0L245.8 265.7L245.5 256.5L246.9 248.2L250.1 240.1L255.1 231.6L261.5 222.7L268.9 213.5L278.2 204.9L292.0 198.8" stroke="#31241a" stroke-width="1.6"/>
<path d="M273.5 208.6L285.0 201.2L301.6 197.0L320.5 196.0L337.5 197.1L353.2 200.8L369.6 207.9L385.3 217.6L398.2 228.9L408.4 241.2L416.6 254.6L422.9 269.5" stroke="#533f2b" stroke-width="1.8"/>
<path d="M430.0 296.3L434.5 313.1L438.9 328.9L442.4 343.5L443.9 357.5L445.8 371.8L448.1 386.6L448.7 400.5" stroke="#2a2018" stroke-width="1.7"/>
<path d="M448.3 425.6L453.2 438.4L458.9 449.9L464.1 460.6L470.1 473.3L475.7 488.2L476.5 502.2L472.3 513.9L467.6 524.1L467.0 534.0" stroke="#574738" stroke-width="1.6"/>
<path d="M249.2 290.0L246.9 275.8L245.4 264.6L245.2 255.5L246.8 247.3L250.3 239.1L255.3 230.6L261.7 221.4L269.2 211.8L278.8 203.0L293.2 197.2L311.9 195.1L330.2 195.4" stroke="#372a1d" stroke-width="1.5"/>
<path d="M351.0 199.0L367.7 205.2L384.3 214.2L398.1 225.2L408.7 237.7L416.8 251.3L423.1 266.3L427.8 282.8L432.0 300.1L436.5 316.8L440.7 332.5L444.0 347.1L445.7 361.0" stroke="#4c3a28" stroke-width="2.1"/>
<path d="M449.4 386.4L450.1 400.4L449.4 413.5L450.9 426.5L455.5 439.1L460.0 450.3" stroke="#4c3e30" stroke-width="1.7"/>
<path d="M458.4 446.7L463.6 457.3L469.0 469.0L475.1 483.5L477.7 498.2L474.7 510.5L469.8 521.0" stroke="#675645" stroke-width="2.4"/>
<path d="M248.5 286.4L246.4 272.9L245.2 262.3L245.4 253.5L247.3 245.3L251.1 237.0L256.5 228.2L263.2 218.9L271.0 209.4L281.5 201.2L297.3 196.3L316.4 194.7" stroke="#3a2c1f" stroke-width="1.9"/>
<path d="M328.5 194.5L345.1 196.3L361.5 201.1L378.6 209.4L393.6 220.0L405.3 232.1L414.4 245.3L421.6 259.6L427.3 275.4L431.7 292.7" stroke="#433323" stroke-width="1.9"/>
<path d="M430.8 293.0L434.8 310.2L439.1 326.4L442.5 341.3L445.3 355.4L448.1 369.7L450.7 384.4L450.7 398.5L448.6 411.5L449.0 424.3L453.8 437.2L459.7 448.9L464.8 459.4L470.4 471.7" stroke="#544435" stroke-width="2.3"/>
<path d="M468.0 467.1L474.3 481.3L477.8 496.1L475.4 508.8L470.3 519.5L467.3 529.4L470.6 539.5" stroke="#625241" stroke-width="2.3"/>
<path d="M244.9 261.3L245.2 252.5L247.4 244.3L251.5 236.1L257.1 227.3L263.8 217.8L271.7 208.2L282.7 200.0L299.0 195.2" stroke="#2d2218" stroke-width="1.6"/>
<path d="M322.5 194.2L339.6 195.6L355.6 199.6L372.6 206.8L388.8 216.4L401.9 227.7L412.0 240.5" stroke="#2c2117" stroke-width="1.3"/>
<path d="M428.1 274.5L432.1 292.1L435.9 309.6L440.1 326.1L443.4 341.2L446.4 355.3" stroke="#31251a" stroke-width="1.6"/>
<path d="M443.9 349.4L446.7 363.5L450.0 378.1L451.8 392.7L450.2 406.1L448.8 418.9L451.5 431.8L457.1 444.1L462.4 454.9L467.9 466.0L474.5 480.0L478.6 495.0L476.5 507.8" stroke="#544436" stroke-width="2.2"/>
<path d="M475.9 512.5L470.4 522.8L468.4 532.6" stroke="#3e3126" stroke-width="2.5"/>
<path d="M245.4 268.1L244.6 258.3L245.4 249.7L248.2 241.6L252.7 233.1L258.7 224.0L265.8 214.4L274.4 204.8L286.8 197.3L304.8 193.5" stroke="#2b2017" stroke-width="2.6"/>
<path d="M332.6 193.5L349.0 196.2L365.7 202.1L382.6 211.1L397.2 221.9L408.6 234.1L417.5 247.4L424.5 262.1L429.5 278.6L433.3 296.3L437.2 313.7L441.1 329.9L443.9 344.7L446.8 358.7" stroke="#483626" stroke-width="2.3"/>
<path d="M450.6 383.3L451.8 397.6L451.0 410.8L451.8 423.9L456.2 436.8L461.2 448.4L465.0 458.7L470.0 470.6L476.3 485.4L479.6 499.8" stroke="#4e3f31" stroke-width="2.2"/>
<path d="M478.7 489.0L479.2 502.9L474.7 514.4L470.0 524.6L469.7 534.4" stroke="#524334" stroke-width="2.5"/>
<path d="M250.1 296.7L247.5 280.9L245.5 268.5L244.6 258.6L245.3 250.0L248.0 241.8L252.4 233.3" stroke="#32261a" stroke-width="2.0"/>
<path d="M255.4 228.4L262.0 218.9L269.7 209.2L279.9 200.6L295.3 195.1L314.6 193.0L333.1 193.1L349.7 195.4" stroke="#1f1711" stroke-width="2.1"/>
<path d="M368.9 202.5L386.0 211.5L400.3 222.6L411.1 235.2L419.4 249.1L425.7 264.3L430.5 281.1L434.6 298.8L438.7 316.2L442.6 332.4L446.0 347.1" stroke="#4e3b29" stroke-width="1.8"/>
<path d="M448.8 365.3L452.5 379.9L454.4 394.5L453.0 408.0L451.8 420.9L454.6 433.8L459.8 445.8L464.9 456.3L470.6 467.6" stroke="#71604d" stroke-width="2.1"/>
<path d="M476.2 479.8L480.9 494.8L480.2 507.7L475.8 518.5L472.2 528.4L474.1 538.4" stroke="#2f251c" stroke-width="1.4"/>
<path d="M245.0 265.3L244.5 255.8L245.8 247.4L249.0 239.2L253.9 230.5L260.3 221.2L267.7 211.4L277.0 202.2L291.0 195.6L309.9 192.6L329.1 192.2L346.0 194.1" stroke="#413122" stroke-width="2.3"/>
<path d="M359.7 197.0L377.5 204.5L394.0 214.5L407.0 226.3L416.8 239.6L424.3 254.1L429.9 270.3L434.1 287.9L437.9 306.0L441.8 323.2L445.6 339.1L448.4 353.3L451.0 367.1L453.4 381.7" stroke="#4e3b29" stroke-width="2.5"/>
<path d="M453.6 403.7L452.7 416.8L454.7 429.9L459.3 442.3L463.6 453.0L468.0 463.6" stroke="#47392c" stroke-width="1.9"/>
<path d="M481.6 489.8L482.5 503.6L477.5 515.0L472.0 525.1L471.1 534.9" stroke="#261d16" stroke-width="1.3"/>
<path d="M248.0 284.6L245.7 271.4L244.4 260.8L244.6 251.9L246.7 243.6L250.7 235.2L256.3 226.1L263.2 216.5L271.1 206.7L282.2 198.2L298.9 193.2" stroke="#3c2e20" stroke-width="2.2"/>
<path d="M320.4 191.6L338.3 192.5L355.0 195.9L372.5 202.6L389.6 212.0L403.5 223.4L414.1 236.2L422.1 250.4" stroke="#6c543a" stroke-width="1.5"/>
<path d="M429.5 270.7L433.7 288.4L437.6 306.3L441.5 323.5L445.3 339.3L448.1 353.5" stroke="#483727" stroke-width="2.7"/>
<path d="M452.7 376.4L455.4 391.1L454.6 404.9L452.8 417.9L454.6 430.9L459.6 443.2" stroke="#493a2d" stroke-width="2.5"/>
<path d="M458.4 441.9L463.2 452.8L468.4 463.4L475.4 476.7L481.4 491.8L481.4 505.2L476.1 516.4L471.0 526.4L471.0 536.3" stroke="#2f241c" stroke-width="1.8"/>
<path d="M244.5 263.6L244.2 254.3L245.6 245.8L249.1 237.5L254.2 228.6L260.7 218.9L268.3 208.9L278.2 199.7L293.3 193.5L312.8 190.8L332.0 190.4L349.2 192.4" stroke="#3c2d20" stroke-width="1.4"/>
<path d="M340.4 190.7L357.5 194.2L375.4 201.4L392.3 211.5L405.8 223.4L416.2 236.4" stroke="#5c4630" stroke-width="2.0"/>
<path d="M422.5 249.4L428.8 264.9L433.3 282.3L437.0 300.5L440.6 318.1L444.2 334.4L447.2 349.0L450.3 362.9L453.6 377.3L455.2 391.9L453.7 405.5L452.1 418.5L455.0 431.6L460.9 444.0" stroke="#382b20" stroke-width="2.2"/>
<path d="M462.1 445.2L466.2 455.5L470.6 466.4L477.0 480.4L482.0 495.4L481.2 508.2L476.5 518.9L472.6 528.7" stroke="#2f241c" stroke-width="2.1"/>
<path d="M244.1 260.1L244.3 251.2L246.5 242.9L250.6 234.5L256.3 225.3L263.2 215.4L271.2 205.4L282.5 196.9L299.6 191.8L319.7 190.0L338.1 190.4" stroke="#35281c" stroke-width="1.2"/>
<path d="M370.7 199.6L388.1 209.1L402.4 220.6L413.4 233.4L422.1 247.2L428.9 262.5L434.0 279.6L437.8 297.8" stroke="#695238" stroke-width="2.8"/>
<path d="M437.5 293.8L440.9 312.1L444.2 329.2L446.8 344.4L449.9 358.3L453.7 372.4L456.8 387.1L456.6 401.3L454.4 414.5L455.0 427.5L459.7 440.2L465.3 451.3" stroke="#221913" stroke-width="2.8"/>
<path d="M478.7 480.8L483.9 495.7L482.7 508.4L477.3 519.1L473.0 528.9L475.0 539.1" stroke="#292018" stroke-width="1.3"/>
<path d="M249.6 294.5L246.6 278.8L244.5 266.6L243.7 256.7L244.6 248.1L247.5 239.9L252.2 231.2L258.3 221.6L265.4 211.3L274.2 201.2L287.5 193.6L306.4 189.9L326.5 189.1" stroke="#2c2117" stroke-width="1.4"/>
<path d="M328.6 189.6L346.2 190.9L363.8 195.3L382.1 203.4L398.3 214.1L410.6 226.6L420.0 240.3L427.3 255.2L433.0 271.6L437.5 289.7L441.1 308.2L444.4 325.8L447.4 341.6" stroke="#614b33" stroke-width="1.7"/>
<path d="M454.6 376.3L457.6 391.0L457.5 405.0L456.4 418.3L458.4 431.4L463.0 443.7" stroke="#251d16" stroke-width="1.8"/>
<path d="M470.6 457.5L476.0 468.6L482.3 482.9L485.3 497.6L482.3 510.0L477.0 520.5L474.3 530.2" stroke="#292018" stroke-width="1.2"/>
<path d="M243.5 259.0L243.9 250.1L246.3 241.8L250.5 233.3L256.3 223.8L263.3 213.6L271.4 203.2" stroke="#473525" stroke-width="2.7"/>
<path d="M306.9 190.1L326.9 189.2L344.6 190.6L361.9 195.1L380.0 203.0L396.6 213.4L409.6 225.4L419.6 238.7L427.2 253.4" stroke="#695138" stroke-width="2.1"/>
<path d="M437.0 282.1L440.6 300.9L443.7 319.1L446.6 335.9L448.9 350.3L452.0 364.1L456.0 378.5L458.5 393.1" stroke="#1a130e" stroke-width="2.2"/>
<path d="M457.4 383.8L457.8 398.1L456.3 411.6L457.0 424.9L461.7 438.0L467.1 449.4L471.8 459.3L477.2 471.0" stroke="#2a2019" stroke-width="1.9"/>
<path d="M484.1 487.8L485.5 501.9L480.7 513.5L474.9 523.7L473.3 533.5" stroke="#31261d" stroke-width="1.6"/>
<path d="M246.1 276.1L244.2 264.4L243.6 254.8L244.9 246.3L248.2 238.1L253.2 229.2L259.6 219.4L267.0 209.0L276.4 199.2L290.9 192.3" stroke="#413122" stroke-width="2.4"/>
<path d="M322.4 188.4L340.8 189.1L358.3 192.3L376.8 199.2L394.4 209.0L408.3 220.9L418.7 234.4L426.6 249.1L432.6 265.2L437.3 283.0L441.1 301.7L444.5 320.0" stroke="#57422d" stroke-width="2.0"/>
<path d="M447.4 342.1L450.6 356.2L454.4 370.1L457.8 384.7L458.3 399.0L456.0 412.5L455.9 425.5L460.2 438.4L465.9 449.8L471.2 459.9L477.6 471.8L484.2 486.6" stroke="#241b15" stroke-width="1.2"/>
<path d="M485.9 498.6L482.2 510.8L476.5 521.2L473.9 531.0" stroke="#1a130e" stroke-width="1.8"/>
</g><!--HAIREND-->
      <path d="M268 398L340 392L340 422L276 419Z" fill="#1b130c" filter="url(#b1)"/>
    </g>
    <!-- skin (face + neck + back) -->
    <use href="#skinp" fill="url(#sking)"/>
    <g clip-path="url(#skinclip)">
      <!-- back shading -->
      <ellipse cx="282" cy="438" rx="32" ry="15" fill="#f1d3bb" opacity=".6" filter="url(#b4)"/>
      <path d="M236 536C238 500 241 465 248 445" stroke="#d3a27c" stroke-width="9" fill="none" opacity=".7" filter="url(#b2)"/>
      <path d="M388 405C394 425 401 440 405 460C410 492 412 515 412.500 536" stroke="#b98a66" stroke-width="8" fill="none" opacity=".6" filter="url(#b2)"/>
      <path d="M318 536C320 525 326 515 332 508" stroke="#c08f6a" stroke-width="3" fill="none" opacity=".7" filter="url(#b2)"/>
      <!-- jaw / neck shading -->
      <path d="M296 412C325 407 350 390 371 352L392 350L392 426L336 418Z" fill="#cc9d7b" opacity=".8" filter="url(#b2)"/>
      <path d="M300 409.500C318 410 330 413 340 415.500" stroke="#a87858" stroke-width="3.500" fill="none" opacity=".7" filter="url(#b15)"/>
      <path d="M386 350C384 375 384 395 388 412" stroke="#a87755" stroke-width="6" fill="none" opacity=".55" filter="url(#b2)"/>
      <!-- face shading -->
      <ellipse cx="288" cy="270" rx="26" ry="17" fill="#f8e5d8" opacity=".7" filter="url(#b4)"/>
      <ellipse cx="288" cy="340" rx="16" ry="13" fill="#f6dfcf" opacity=".7" filter="url(#b4)"/>
      <ellipse cx="284" cy="398" rx="10" ry="6" fill="#f3d8c6" opacity=".7" filter="url(#b2)"/>
      <path d="M322 256C334 280 348 298 364 318L368 350C360 375 342 392 318 402" stroke="#bf8e70" stroke-width="9" fill="none" opacity=".5" filter="url(#b4)"/>
      <path d="M264 265C270 252 284 246 298 246C310 248 320 258 327 268" stroke="#c49a80" stroke-width="4" fill="none" opacity=".4" filter="url(#b2)"/>
      <!-- ear -->
      <path d="M370 323C374 313 384 309 391 312C397 316 396 325 393 332C390 339 384 344 378 346C374 345 372 337 370 323Z" fill="#dcae92"/>
      <path d="M376 323C380 316 388 315 391 319C392 327 386 335 380 340" stroke="#a97559" stroke-width="2" fill="none" filter="url(#b1)"/>
      <!-- brows -->
      <path d="M285 302C292 296.500 302 294.500 310 296.500C315 298 319 300 323 302.500C316 300.500 308 299 300 299.500C294 300 289 301.500 285 302Z" fill="#4a3323" stroke="#4a3323" stroke-width="1.200"/>
      <path d="M253.500 296C257 295.500 262 297 267 300.500C262 299.500 257 298.500 253.500 298.500Z" fill="#4a3323" stroke="#4a3323" stroke-width="1"/>
      <!-- eyes -->
      <path d="M288 309C296 303.500 310 303.500 321 309.500L320 317C312 322 300 323 292 319Z" fill="#b98a6e" opacity=".55" filter="url(#b15)"/>
      <path d="M252 306C257 303.500 263 304.500 268 309L266 316C261 318 256 317.500 253 315Z" fill="#b98a6e" opacity=".5" filter="url(#b15)"/>
      <path d="M294 316C298 311.800 306 311 312 312.500C315 313.300 317 314.500 318.500 316C313 318.500 303 320 297.500 318.500Z" fill="#ddd3cb"/>
      <circle cx="304.800" cy="315.200" r="3" fill="#5d6a68"/><circle cx="304.800" cy="315.200" r="1.500" fill="#191310"/>
      <path d="M291.500 317.500C296 311.500 305 309.500 312.500 311.300C316 312.300 318.800 314 320.500 316.200" stroke="#1c120c" stroke-width="2.300" fill="none"/>
      <path d="M296 319.500C302 321.300 310 320.500 318 317" stroke="#6e4a3a" stroke-width="1.300" fill="none"/>
      <path d="M253.500 311C256 309.500 261 309.500 264 312C261 314 256 314.500 254 313.500Z" fill="#cfc4bc"/>
      <circle cx="258" cy="311.800" r="2.100" fill="#48524f"/>
      <path d="M249.500 312.500C254 308 261 307.800 266 311.800" stroke="#1c120c" stroke-width="2.200" fill="none"/>
      <path d="M254 314.500C258 315.500 262 315 265 313" stroke="#6e4a3a" stroke-width="1" fill="none"/>
      <circle cx="307.500" cy="287.700" r=".9" fill="#6a4a38"/>
      <!-- nose -->
      <path d="M284 318C281 326 279 333 278 340" stroke="#cfa188" stroke-width="4" fill="none" opacity=".55" filter="url(#b15)"/>
      <path d="M268 320C266 331 263.500 340 264.500 346" stroke="#fbeee6" stroke-width="3.500" fill="none" opacity=".8" filter="url(#b15)"/>
      <path d="M277.500 338.500C283 340 286.500 345.500 284 351.500C282 355 277 355.800 273.500 354.800" stroke="#b5846a" stroke-width="1.700" fill="none" filter="url(#b1)"/>
      <path d="M271.500 352.800C273.500 350.600 278 350.400 280.500 352.300C278.500 354.600 274 354.800 271.500 352.800Z" fill="#7e4e3c"/>
      <path d="M263 349.500C266 353 270 354.500 274 355" stroke="#c39378" stroke-width="1.600" fill="none" filter="url(#b1)"/>
      <path d="M286 352C289 358 291 364 296 369" stroke="#d7ab93" stroke-width="2.500" fill="none" opacity=".6" filter="url(#b15)"/>
      <!-- lips -->
      <path d="M266 368.500C270 366.500 274 366 277 367.500C280 366.500 283 367 286 368.500C291 370.500 296 372 300 373C295 374.500 290 375 284 375C277 375 271 374.500 267 375.500C266 373 265.500 370.500 266 368.500Z" fill="#c2544f"/>
      <path d="M267 375.500C272 374.500 280 375 286 375C291 375 296 374 300 373C296 378.500 290 383 283 385C277 386.500 272 385 270 382C268 380 267 378 267 375.500Z" fill="#de7b74"/>
      <ellipse cx="280" cy="380" rx="5" ry="2.200" fill="#edaea2" opacity=".8" filter="url(#b1)"/>
      <path d="M267 375.500C277 374 290 375.500 300 373" stroke="#8d3f38" stroke-width=".9" fill="none"/>
      <path d="M272 388C278 390 286 389 292 385" stroke="#c08d70" stroke-width="2" fill="none" opacity=".7" filter="url(#b1)"/>
    </g>
    <!-- strap -->
    <path d="M314 416.500C326 430 337 447 343 465C350 488 355 512 358 536" stroke="#f3e4da" stroke-width="1.600" fill="none"/>
    <!-- earring -->
    <path d="M376.500 346L375 361" stroke="#d8d4d0" stroke-width="1.600"/>
    <rect x="369.500" y="361" width="11.500" height="12" rx="1.500" fill="#eceef0" stroke="#b9b4ae" stroke-width="1"/>
    <rect x="372" y="363.500" width="6.500" height="7" fill="#fff" stroke="#cfd3d6" stroke-width=".7"/>
    <!-- tattoo -->
    <path d="M383 423C386 421 390 422 393 423.500M385 425.500L391 426" stroke="#3a3029" stroke-width="1.200" fill="none"/>
    <!-- arm sliver bottom right -->
    <path d="M479 523C482 515 488 510 490 516L491 536H479Z" fill="#d9ab88"/>
  </g>
  <!-- faint watermark on white -->
  <text x="385" y="173.400" font-family="Liberation Sans, sans-serif" font-weight="bold" font-size="24" letter-spacing=".1" fill="#ffffff">ExpertClipping<tspan fill="#f6f6f6">.com</tspan></text>
  <text x="400.500" y="189.500" font-family="Liberation Sans, sans-serif" font-weight="bold" font-size="10" fill="#f8f8f8">Best clipping path &amp; image editing service</text>
</svg>

  </div>
  <!-- watermark -->
  <div class="a b" style="left:203px;top:547.5px;font-size:24px;line-height:28px;letter-spacing:.1px;color:#fff;white-space:nowrap;-webkit-text-stroke:.5px #fff">ExpertClipping<span style="color:#d2d2d2;-webkit-text-stroke:.5px #d2d2d2">.com</span></div>
  <div class="a b" style="left:218px;top:575px;font-size:10px;line-height:13px;color:#e4e4e4;white-space:nowrap">Best clipping path &amp; image editing service</div>
  <!-- right dock -->
  <div class="a" style="left:645px;top:57px;width:224px;height:562px;background:#2e2e2e"></div>
  <div class="a" style="left:647px;top:58px;width:222px;height:10px;background:#373737"></div>
  <svg class="a" style="left:668px;top:60px" width="8" height="6" viewBox="0 0 8 6"><path d="M3.5 0V6L0 3ZM7.5 0V6L4 3Z" fill="#d0d0d0"/></svg>
  <svg class="a" style="left:856px;top:60px" width="8" height="6" viewBox="0 0 8 6"><path d="M0 0V6L3.5 3ZM4 0V6L7.5 3Z" fill="#d0d0d0"/></svg>
  <!-- icon column -->
  <div class="a" style="left:647px;top:68px;width:32px;height:551px;background:#535353"></div>
  <div class="a" style="left:647px;top:68px;width:32px;height:1px;background:#626262"></div>
  <div class="a" style="left:647px;top:102px;width:32px;height:2px;background:#353535;border-bottom:1px solid #626262"></div>
  <div class="a" style="left:647px;top:136px;width:32px;height:2px;background:#353535;border-bottom:1px solid #626262"></div>
  <div class="a" style="left:655px;top:71px;width:16px;height:3px;background:repeating-linear-gradient(90deg,#3a3a3a 0 1px,#5c5c5c 1px 2px)"></div>
  <div class="a" style="left:655px;top:105px;width:16px;height:3px;background:repeating-linear-gradient(90deg,#3a3a3a 0 1px,#5c5c5c 1px 2px)"></div>
  <svg class="a" style="left:657px;top:80px" width="15" height="16" viewBox="0 0 15 16">
    <rect x="1" y="1" width="4" height="3.4" fill="none" stroke="#e0e0e0" stroke-width="1"/><rect x="1" y="6" width="4" height="3.4" fill="none" stroke="#e0e0e0" stroke-width="1"/><rect x="0.5" y="11" width="5" height="4" fill="#cfcfcf"/>
    <path d="M8.5 13Q13.5 10 11.5 3.5" fill="none" stroke="#e0e0e0" stroke-width="1.6"/><path d="M8 4.5L11.5 1L13.5 5Z" fill="#e0e0e0"/>
  </svg>
  <svg class="a" style="left:656px;top:113px" width="16" height="17" viewBox="0 0 16 17">
    <path d="M1 4.5L5.5 2L10 4.5V10L5.5 12.5L1 10Z" fill="#d8d8d8"/><path d="M1 4.500L5.500 7L10 4.500M5.500 7V12.500" stroke="#555" stroke-width="1" fill="none"/>
    <rect x="11.500" y="2.500" width="3.500" height="3" fill="#e8e8e8"/><rect x="11.500" y="7" width="3.500" height="3" fill="#e8e8e8"/>
    <rect x="1" y="13.500" width="14" height="3" fill="#e8e8e8"/><rect x="11" y="14.300" width="3" height="1.400" fill="#444"/>
  </svg>
  <!-- panel styles -->
  <style>
  .pn{position:absolute;left:681px;width:188px;background:#535353}
  .tb{position:absolute;left:681px;width:188px;height:14px;background:#424242;border-bottom:1px solid #383838}
  .tab{position:absolute;height:14px;border-right:1px solid #333;background:#484848}
  .tab.on{background:#535353;height:15px;border-top:1px solid #666}
  .tt{position:absolute;white-space:nowrap;transform-origin:0 50%;transform:scaleX(.95);line-height:12px;font-size:9px;font-weight:bold;color:#a8a8a8}
  .tt.on{color:#f0f0f0}
  </style>
  <!-- Color panel -->
  <div class="pn" style="top:68px;height:98px"></div>
  <div class="tb" style="top:68px"></div>
  <div class="tab on" style="left:681px;top:68px;width:34px"></div><div class="tt on" style="left:687px;top:70px">Color</div>
  <div class="tab" style="left:715px;top:68px;width:50px"></div><div class="tt" style="left:721px;top:70px">Swatches</div>
  <svg class="a" style="left:853px;top:72px" width="12" height="8" viewBox="0 0 12 8"><path d="M0 1.500H4L2 4Z" fill="#ccc"/><path d="M5 1H12M5 3.500H12M5 6H12" stroke="#bbb" stroke-width="1.200"/></svg>
  <div class="a" style="left:695px;top:100px;width:16px;height:16px;background:#000;border:1px solid #e8e8e8;box-shadow:0 0 0 1px #333"></div>
  <div class="a" style="left:686px;top:90px;width:17px;height:17px;background:#fff;border:1px solid #f4f4f4;box-shadow:0 0 0 1px #333"></div>
  <div class="t" style="left:717px;top:91px;color:#f0f0f0;transform:none;font-size:9px">R</div>
  <div class="t" style="left:717px;top:111px;color:#f0f0f0;transform:none;font-size:9px">G</div>
  <div class="t" style="left:717px;top:131px;color:#f0f0f0;transform:none;font-size:9px">B</div>
  <div class="a" style="left:730px;top:90px;width:85px;height:5px;background:linear-gradient(90deg,#00ffff,#fff);border:1px solid #333;border-width:0 0 1px 0"></div>
  <div class="a" style="left:730px;top:110px;width:85px;height:5px;background:linear-gradient(90deg,#ff00ff,#fff);border:1px solid #333;border-width:0 0 1px 0"></div>
  <div class="a" style="left:730px;top:131px;width:85px;height:5px;background:linear-gradient(90deg,#ffff00,#fff);border:1px solid #333;border-width:0 0 1px 0"></div>
  <svg class="a" style="left:809px;top:96px" width="9" height="8" viewBox="0 0 9 8"><path d="M4.500 0.500L8.500 7.500H0.500Z" fill="#b8b8b8" stroke="#444" stroke-width=".6"/></svg>
  <svg class="a" style="left:809px;top:116px" width="9" height="8" viewBox="0 0 9 8"><path d="M4.500 0.500L8.500 7.500H0.500Z" fill="#b8b8b8" stroke="#444" stroke-width=".6"/></svg>
  <svg class="a" style="left:809px;top:137px" width="9" height="8" viewBox="0 0 9 8"><path d="M4.500 0.500L8.500 7.500H0.500Z" fill="#b8b8b8" stroke="#444" stroke-width=".6"/></svg>
  <div class="fld" style="left:819px;top:89px;width:30px;height:15px"></div><div class="t" style="left:824px;top:91px;color:#fff">255</div>
  <div class="fld" style="left:819px;top:110px;width:30px;height:15px"></div><div class="t" style="left:824px;top:112px;color:#fff">255</div>
  <div class="fld" style="left:819px;top:130px;width:30px;height:15px"></div><div class="t" style="left:824px;top:132px;color:#fff">255</div>
  <div class="a" style="left:684px;top:152px;width:164px;height:12px;background:linear-gradient(rgba(255,255,255,.85),rgba(255,255,255,0) 45%,rgba(0,0,0,0) 55%,rgba(0,0,0,.9)),linear-gradient(90deg,#f00,#ff0 17%,#0f0 33%,#0ff 50%,#00f 67%,#f0f 83%,#f00)"></div>
  <div class="a" style="left:848px;top:152px;width:6px;height:6px;background:#fff"></div>
  <div class="a" style="left:848px;top:158px;width:6px;height:6px;background:#000"></div>
  <!-- Adjustments panel -->
  <div class="pn" style="top:169px;height:101px"></div>
  <div class="tb" style="top:169px"></div>
  <div class="tab on" style="left:681px;top:169px;width:62px"></div><div class="tt on" style="left:687px;top:171px">Adjustments</div>
  <div class="tab" style="left:743px;top:169px;width:36px"></div><div class="tt" style="left:749px;top:171px">Styles</div>
  <svg class="a" style="left:853px;top:173px" width="12" height="8" viewBox="0 0 12 8"><path d="M0 1.500H4L2 4Z" fill="#ccc"/><path d="M5 1H12M5 3.500H12M5 6H12" stroke="#bbb" stroke-width="1.200"/></svg>
  <div class="t b" style="left:688px;top:188px;font-size:9px;transform:none;color:#f4f4f4">Add an adjustment</div>
  <svg class="a" style="left:681px;top:184px" width="188" height="86" viewBox="681 184 188 86">
    <defs>
      <linearGradient id="gv" x1="0" y1="0" x2="0" y2="1"><stop offset="0" stop-color="#e8e8e8"/><stop offset="1" stop-color="#8a8a8a"/></linearGradient>
      <linearGradient id="gh" x1="0" y1="0" x2="1" y2="0"><stop offset="0" stop-color="#5a5a5a"/><stop offset="1" stop-color="#e8e8e8"/></linearGradient>
      <linearGradient id="gd" x1="0" y1="1" x2="1" y2="0"><stop offset="0" stop-color="#666"/><stop offset=".5" stop-color="#ddd"/><stop offset="1" stop-color="#666"/></linearGradient>
    </defs>
    <!-- row1 -->
    <g fill="none" stroke="#e4e4e4">
      <circle cx="726.5" cy="211" r="3.6" stroke-width="1.2"/><path d="M726.500 207.400A3.600 3.600 0 0 1 726.500 214.600Z" fill="#e4e4e4" stroke="none"/>
      <path d="M726.500 203.500V205.500M726.500 216.500V218.500M719 211H721M732 211H734M721.200 205.700L722.600 207.100M730.400 214.900L731.800 216.300M721.200 216.300L722.600 214.900M730.400 207.100L731.800 205.700" stroke-width="1.300"/>
    </g>
    <path d="M740 215.500V210L741.500 211V208.500L743 210.500V207L744.500 209.500V206L746 209V206.500L747.500 209.500V207L749 210V207.500L750.500 210.500V208L752 210V206.500L753.500 210V208L755 211V215.500Z" fill="#e0e0e0"/>
    <rect x="740" y="214.500" width="15" height="1.500" fill="#f0f0f0"/>
    <rect x="761.500" y="205.500" width="13" height="11" fill="#6a6a6a" stroke="#e4e4e4" stroke-width="1"/><path d="M761.500 209H774.500M761.500 212.500H774.500M766 205.500V216.500M770.500 205.500V216.500" stroke="#cfcfcf" stroke-width=".7"/><path d="M762 216Q769 214 774 206" stroke="#fff" stroke-width="1.300" fill="none"/>
    <rect x="781.500" y="205.500" width="13" height="11" fill="#777" stroke="#e4e4e4" stroke-width="1"/><path d="M781.500 216.500L794.500 205.500V216.500Z" fill="#3a3a3a"/><path d="M783.500 208.500H787.500M785.500 206.700V210.300M789.500 213.500H793" stroke="#fff" stroke-width="1.100"/>
    <path d="M801.500 205L815 205L808.300 217.500Z" fill="url(#gv)" stroke="#e8e8e8" stroke-width="1"/>
    <!-- row2 -->
    <rect x="710.500" y="229" width="13" height="11" fill="url(#gv)" stroke="#e4e4e4" stroke-width="1"/><rect x="711" y="229.500" width="12" height="3" fill="#dcdcdc"/><path d="M714 229.500V232.500M717 229.500V232.500M720 229.500V232.500" stroke="#666" stroke-width=".8"/>
    <g stroke="#e4e4e4" fill="none" stroke-width="1.100"><path d="M737 228.500V239M733.500 240H740.500M731.500 231.500H742.500"/><path d="M729.500 237.500L732 231.500L734.500 237.500ZM739.500 237.500L742 231.500L744.500 237.500Z" fill="#cfcfcf"/></g>
    <circle cx="737" cy="229" r="1.200" fill="#e4e4e4"/>
    <rect x="751" y="229" width="13" height="11" fill="#e6e6e6" stroke="#e4e4e4" stroke-width="1"/><rect x="751.500" y="229.500" width="6" height="10" fill="#4a4a4a"/>
    <path d="M771 230.500H773.500L774.500 229H778.500L779.500 230.500H783V238H771Z" fill="#dadada"/><circle cx="776.500" cy="234" r="2.300" fill="#555"/><circle cx="781" cy="237.500" r="3.600" fill="#9a9a9a" stroke="#eee" stroke-width="1"/>
    <circle cx="797.500" cy="231.500" r="3.700" fill="#e8e8e8"/><circle cx="794.500" cy="236.500" r="3.700" fill="#dcdcdc"/><circle cx="800.500" cy="236.500" r="3.700" fill="#d0d0d0"/><path d="M797.500 232.500V236.500M797.500 234.800L795.300 233.500M797.500 234.800L799.700 233.500" stroke="#555" stroke-width="1"/>
    <rect x="811.500" y="229" width="13" height="11" fill="#e2e2e2" stroke="#e8e8e8" stroke-width="1"/><path d="M811.500 232.700H824.500M811.500 236.300H824.500M815.800 229V240M820.200 229V240" stroke="#555" stroke-width="1"/>
    <!-- row3 -->
    <rect x="720.500" y="251" width="13" height="11" fill="#6e6e6e" stroke="#e4e4e4" stroke-width="1"/><path d="M721 261.500L733 251.500V261.500Z" fill="#d4d4d4"/><circle cx="727" cy="256.500" r="2.800" fill="#444"/><path d="M725 258.500A2.800 2.800 0 0 0 729 254.500Z" fill="#eee"/>
    <rect x="741" y="251" width="13" height="11" fill="url(#gd)" stroke="#e4e4e4" stroke-width="1"/>
    <rect x="761.500" y="251" width="13" height="11" fill="#e0e0e0" stroke="#e4e4e4" stroke-width="1"/><path d="M762 258L764.500 256.500L766 258L768 255L770 256.500L772 253.500L774 255V261.500H762Z" fill="#3c3c3c"/>
    <rect x="781.500" y="251" width="13" height="11" fill="#8a8a8a" stroke="#e4e4e4" stroke-width="1"/><path d="M781.500 251L794.500 262M794.500 251L781.500 262" stroke="#e4e4e4" stroke-width="1"/><path d="M781.500 251L788 256.500L781.500 262ZM794.500 251L788 256.500L794.500 262Z" fill="#bdbdbd" opacity=".6"/>
    <rect x="801.500" y="251" width="13" height="11" fill="url(#gh)" stroke="#e4e4e4" stroke-width="1"/>
  </svg>

  <!-- Layers panel -->
  <div class="pn" style="top:273px;height:346px"></div>
  <div class="tb" style="top:273px"></div>
  <div class="tab on" style="left:681px;top:273px;width:37px"></div><div class="tt on" style="left:687px;top:275px">Layers</div>
  <div class="tab" style="left:718px;top:273px;width:48px"></div><div class="tt" style="left:724px;top:275px">Channels</div>
  <div class="tab" style="left:766px;top:273px;width:34px"></div><div class="tt" style="left:772px;top:275px">Paths</div>
  <svg class="a" style="left:853px;top:277px" width="12" height="8" viewBox="0 0 12 8"><path d="M0 1.500H4L2 4Z" fill="#ccc"/><path d="M5 1H12M5 3.500H12M5 6H12" stroke="#bbb" stroke-width="1.200"/></svg>
  <!-- layers controls -->
  <div class="dd" style="left:685px;top:292px;width:58px;height:15px"></div>
  <svg class="a" style="left:690px;top:294px" width="11" height="11" viewBox="0 0 11 11"><circle cx="6" cy="4.500" r="3.200" fill="none" stroke="#f0f0f0" stroke-width="1.400"/><path d="M3.800 6.800L1 10" stroke="#f0f0f0" stroke-width="1.700"/></svg>
  <div class="t" style="left:703px;top:293.5px">Kind</div>
  <svg class="ud" style="left:733px;top:295px" viewBox="0 0 7 10"><path d="M0.500 4L3.500 0.800L6.500 4ZM0.500 6L3.500 9.200L6.500 6Z" fill="#f0f0f0"/></svg>
  <svg class="a" style="left:752px;top:292px" width="116" height="16" viewBox="752 292 116 16">
    <rect x="754" y="295" width="10" height="8.500" fill="#4a4a4a" stroke="#e0e0e0" stroke-width="1"/><path d="M755.500 302L757.500 299L759.300 300.800L760.700 299.500L762.500 302Z" fill="#e0e0e0"/><circle cx="761.300" cy="297.300" r=".9" fill="#e0e0e0"/>
    <circle cx="779" cy="299.300" r="3.900" fill="#e2e2e2"/><path d="M776.200 302.100A3.900 3.900 0 0 1 781.800 296.500Z" fill="#555"/>
    <text x="794" y="304" font-family="Liberation Serif, serif" font-weight="bold" font-size="12.500" fill="#e8e8e8">T</text>
    <rect x="816" y="295.500" width="7" height="7.500" fill="none" stroke="#e0e0e0" stroke-width="1"/><g fill="#e0e0e0"><rect x="814.500" y="294" width="2.600" height="2.600"/><rect x="822" y="294" width="2.600" height="2.600"/><rect x="814.500" y="301.800" width="2.600" height="2.600"/><rect x="822" y="301.800" width="2.600" height="2.600"/></g>
    <path d="M839 294H842.500L845 296.500V304H839Z" fill="#cfcfcf"/><rect x="835.500" y="298.800" width="5" height="5.200" fill="#eee" stroke="#555" stroke-width=".6"/>
    <rect x="857" y="292.500" width="7" height="14" rx="1" fill="#3a3a3a" stroke="#2e2e2e" stroke-width="1"/><rect x="858" y="293.500" width="5" height="5.500" fill="#8c8c8c"/>
  </svg>
  <div class="a" style="left:681px;top:311px;width:188px;height:1px;background:#454545"></div>
  <div class="dd" style="left:685px;top:315px;width:93px;height:16px"></div>
  <div class="t" style="left:691px;top:317px">Normal</div>
  <svg class="ud" style="left:768px;top:318px" viewBox="0 0 7 10"><path d="M0.500 4L3.500 0.800L6.500 4ZM0.500 6L3.500 9.200L6.500 6Z" fill="#f0f0f0"/></svg>
  <div class="t" style="left:784px;top:316px">Opacity:</div>
  <div class="fld" style="left:819px;top:315px;width:31px;height:16px"></div><div class="t" style="left:823px;top:317px;color:#fff">100%</div>
  <div class="dd" style="left:849px;top:315px;width:15px;height:16px;border-radius:0 3px 3px 0"></div>
  <svg class="a" style="left:853px;top:322px" width="7" height="4" viewBox="0 0 7 4"><path d="M0.800 0.300H6.200L3.500 3.500Z" fill="#f0f0f0"/></svg>
  <div class="a" style="left:681px;top:334px;width:188px;height:1px;background:#454545"></div>
  <div class="t" style="left:686px;top:341px">Lock:</div>
  <svg class="a" style="left:712px;top:339px" width="72" height="16" viewBox="712 339 72 16">
    <rect x="714" y="342" width="9.500" height="9.500" fill="#e6e6e6"/><g fill="#666"><rect x="717.200" y="342" width="3.100" height="3.100"/><rect x="714" y="345.200" width="3.100" height="3.100"/><rect x="720.400" y="345.200" width="3.100" height="3.100"/><rect x="717.200" y="348.400" width="3.100" height="3.100"/></g>
    <path d="M743.500 340.500L737 347.500L738.500 349Z" fill="#eee"/><path d="M736.500 347.500Q733 347.500 731 352Q736 353 738.500 349.500Z" fill="#eee"/>
    <path d="M755.700 342V352M750.700 347H760.700" stroke="#eee" stroke-width="1.100"/><path d="M755.700 340.300L757.700 343H753.700ZM755.700 353.700L757.700 351H753.700ZM749 347L751.700 345V349ZM762.400 347L759.700 345V349Z" fill="#eee"/>
    <rect x="770.500" y="346" width="8.500" height="6.500" rx=".8" fill="#eee"/><path d="M772.300 346V344A2.400 2.400 0 0 1 777.100 344V346" fill="none" stroke="#eee" stroke-width="1.400"/><circle cx="774.700" cy="349" r="1" fill="#555"/>
  </svg>
  <div class="t" style="left:802px;top:339px">Fill:</div>
  <div class="fld" style="left:819px;top:339px;width:31px;height:15px"></div><div class="t" style="left:823px;top:341px;color:#fff">100%</div>
  <div class="dd" style="left:849px;top:339px;width:15px;height:15px;border-radius:0 3px 3px 0"></div>
  <svg class="a" style="left:853px;top:345px" width="7" height="4" viewBox="0 0 7 4"><path d="M0.800 0.300H6.200L3.500 3.500Z" fill="#f0f0f0"/></svg>
  <!-- layer list -->
  <div class="a" style="left:681px;top:359px;width:188px;height:243px;background:#484848;border-top:1px solid #3a3a3a"></div>
  <div class="a" style="left:856px;top:360px;width:13px;height:242px;background:#444;border-left:1px solid #3e3e3e"></div>
  <div class="a" style="left:681px;top:360px;width:175px;height:25px;background:#535353;border-bottom:1px solid #3c3c3c"></div>
  <div class="a" style="left:681px;top:385px;width:175px;height:27px;background:#535353;border-bottom:1px solid #3c3c3c"></div>
  <div class="a" style="left:706px;top:385px;width:150px;height:26px;background:#6a7b98"></div>
  <div class="a" style="left:705px;top:360px;width:1px;height:52px;background:#404040"></div>
  <!-- eyes -->
  <svg class="a" style="left:687px;top:368px" width="13" height="9" viewBox="0 0 13 9"><path d="M0.500 4.500Q6.500 -2 12.500 4.500Q6.500 11 0.500 4.500Z" fill="#e8e8e8"/><circle cx="6.500" cy="4.300" r="2.300" fill="#444"/><circle cx="5.800" cy="3.500" r=".8" fill="#eee"/></svg>
  <svg class="a" style="left:687px;top:394px" width="13" height="9" viewBox="0 0 13 9"><path d="M0.500 4.500Q6.500 -2 12.500 4.500Q6.500 11 0.500 4.500Z" fill="#e8e8e8"/><circle cx="6.500" cy="4.300" r="2.300" fill="#444"/><circle cx="5.800" cy="3.500" r=".8" fill="#eee"/></svg>
  <!-- thumbs -->
  <div class="a" style="left:710px;top:363px;width:27px;height:19px;border:1px solid #e8e8e8;background:repeating-conic-gradient(#ccc 0 25%,#fff 0 50%) 0 0/6px 6px"></div>
  <svg class="a" style="left:711px;top:364px" width="25" height="17" viewBox="0 0 25 17"><path d="M9 6Q9 1 14 1.500Q19 2 19.500 8Q21 13 20 17H14L13 11Q11 10 9 6Z" fill="#3a2a1e"/><path d="M9 5Q12 3.500 13 6.500Q14 9 12.500 11L11 10.500Q9 8.500 9 5Z" fill="#d9a98a"/><path d="M8 17Q8.500 12.500 12 11.500L14 12L15 17Z" fill="#d7a685"/></svg>
  <div class="a" style="left:709px;top:387px;width:29px;height:21px;border:1px solid #f0f0f0"></div>
  <div class="a" style="left:713px;top:386px;width:21px;height:23px;background:#6a7b98"></div>
  <div class="a" style="left:708px;top:391px;width:31px;height:13px;background:#6a7b98"></div>
  <div class="a" style="left:711px;top:389px;width:25px;height:17px;border:1px solid #1c1c1c;background:#fff"></div>
  <div class="t" style="left:745px;top:367px;color:#f2f2f2">Layer 1</div>
  <div class="t" style="left:745px;top:393px;color:#fff">Layer 2</div>
  <!-- red box -->
  <div class="a" style="left:680px;top:383px;width:183px;height:34px;border:2px solid #e3232d"></div>
  <!-- bottom bar -->
  <div class="a" style="left:681px;top:602px;width:188px;height:17px;background:#535353;border-top:1px solid #3a3a3a"></div>
  <svg class="a" style="left:694px;top:603px" width="156" height="16" viewBox="694 603 156 16">
    <g fill="none" stroke="#d8d8d8" stroke-width="1.300"><rect x="697" y="608.500" width="7" height="5" rx="2.500"/><rect x="701.500" y="608.500" width="7" height="5" rx="2.500"/></g>
    <text x="720" y="615" font-family="Liberation Serif, serif" font-style="italic" font-size="13" fill="#e8e8e8">fx</text><path d="M732 614.500H735L733.500 616.500Z" fill="#ddd"/>
    <rect x="743" y="606.500" width="12" height="9" fill="#dcdcdc"/><circle cx="749" cy="611" r="2.700" fill="#444"/>
    <circle cx="770.500" cy="611" r="4.700" fill="#e0e0e0"/><path d="M767.200 614.300A4.700 4.700 0 0 1 773.800 607.700Z" fill="#4a4a4a"/><path d="M777 614.500H780L778.500 616.500Z" fill="#ddd"/>
    <path d="M788.500 606H793L794 607.500H799.500V615.500H788.500Z" fill="#dcdcdc"/>
    <path d="M811 606.500H821V616.500H817V610.500H811Z" fill="#dcdcdc"/><path d="M812 611.500H816V615.500Z" fill="#dcdcdc"/>
    <path d="M833.500 608.500H844M836.500 608V606.500H841V608" stroke="#dcdcdc" stroke-width="1.200" fill="none"/><path d="M834.500 610H843L842.300 616.500H835.200Z" fill="none" stroke="#dcdcdc" stroke-width="1.200"/><path d="M837.300 611V615.500M840.200 611V615.500" stroke="#dcdcdc" stroke-width="1"/>
  </svg>

  <!-- toolbar -->
  <div class="a" style="left:5px;top:57px;width:32px;height:562px;background:#535353"></div>
  <div class="a" style="left:37px;top:57px;width:2px;height:562px;background:#333"></div>
  <div class="a" style="left:5px;top:57px;width:32px;height:11px;background:#2f2f2f"></div>
  <svg class="a" style="left:8px;top:60px" width="8" height="6" viewBox="0 0 8 6"><path d="M0 0V6L3.500 3ZM4 0V6L7.500 3Z" fill="#d0d0d0"/></svg>
  <div class="a" style="left:13px;top:71px;width:17px;height:3px;background:repeating-linear-gradient(90deg,#3a3a3a 0 1px,#5c5c5c 1px 2px)"></div>
  <div class="a" style="left:9px;top:212px;width:24px;height:1px;background:#3e3e3e;box-shadow:0 1px 0 #5e5e5e"></div>
  <div class="a" style="left:9px;top:391px;width:24px;height:1px;background:#3e3e3e;box-shadow:0 1px 0 #5e5e5e"></div>
  <div class="a" style="left:9px;top:482px;width:24px;height:1px;background:#3e3e3e;box-shadow:0 1px 0 #5e5e5e"></div>
  <!-- selected tool bg -->
  <div class="a" style="left:8px;top:324px;width:27px;height:22px;background:#343434;border:1px solid #2a2a2a;border-radius:2px"></div>
  <svg class="a" style="left:5px;top:76px" width="34" height="543" viewBox="5 76 34 543">
    <g fill="#dedede">
      <!-- corner triangles -->
      <path d="M32 119V122H29ZM32 141V144H29ZM32 164V167H29ZM32 186V189H29ZM32 208V211H29ZM32 232V235H29ZM32 254V257H29ZM32 277V280H29ZM32 299V302H29ZM32 320V323H29ZM32 340V343H29ZM32 363V366H29ZM32 385V388H29ZM32 409V412H29ZM32 431V434H29ZM32 454V457H29ZM32 476V479H29ZM32 500V503H29ZM32 609V612H29Z" fill="#bdbdbd"/>
      <!-- move -->
      <path d="M13.500 85.500L13.500 95.500L20.500 90.500Z"/>
      <path d="M25 90V97M21.500 93.500H28.500" stroke="#dedede" stroke-width="1"/><path d="M25 88.800L26.500 90.800H23.500ZM25 98.200L26.500 96.200H23.500ZM20.300 93.500L22.300 92V95ZM29.700 93.500L27.700 92V95Z"/>
      <!-- ellipse marquee -->
      <ellipse cx="20.500" cy="113.500" rx="7" ry="5.800" fill="none" stroke="#dedede" stroke-width="1.300" stroke-dasharray="2.600 1.500"/>
      <!-- lasso -->
      <path d="M15.500 139.500Q11.500 134 16 130.500Q22 127.500 27 130.500Q30 134 25 137.500Q20 140 16.500 138" fill="none" stroke="#dedede" stroke-width="1.500"/><path d="M16 137.500Q13.500 139.500 15 142.500L17.500 142" fill="none" stroke="#dedede" stroke-width="1.300"/>
      <!-- quick selection -->
      <ellipse cx="17.500" cy="159" rx="4.500" ry="5" fill="none" stroke="#dedede" stroke-width="1.100" stroke-dasharray="2 1.400"/><path d="M29 150.500L30.500 152L23 160L21.500 158.500Z"/><path d="M21 158.500Q17.500 159 16.500 163.500Q21 164.500 23.500 160.500Z"/>
      <!-- crop -->
      <path d="M17 172.500V184.500H28.500M13.500 176.500H25V188.500" fill="none" stroke="#dedede" stroke-width="1.800"/>
      <!-- eyedropper -->
      <path d="M26.500 193L29.500 196L26 199.500L27 200.500L25.500 202L22 198.500L23.500 197L24.500 198Z"/><path d="M22.500 199L25 201.500L16.500 210L13.500 211L14 208Z" fill="none" stroke="#dedede" stroke-width="1.200"/>
      <!-- healing -->
      <path d="M25.500 218L30.500 223L19.500 234L14.500 229Z" stroke="#dedede" stroke-width="1.500" stroke-linejoin="round"/><path d="M21.500 224.500L24 227M20 226L22.500 228.500" stroke="#555" stroke-width="1.200"/><path d="M13 225Q11 219.500 17 218.500" fill="none" stroke="#dedede" stroke-width="1" stroke-dasharray="1.600 1.200"/>
      <!-- brush -->
      <path d="M29.500 240.500L31 242L21.500 252L19.500 250Z"/><path d="M19 250.500Q15 250.500 13 256.500Q19 257.500 21.500 252.500Z"/>
      <!-- stamp -->
      <path d="M18.500 264Q18.500 261.500 21 261.500Q23.500 261.500 23.500 264L22.500 270H28V274.500H14V270H19.500Z"/><rect x="14" y="276" width="14" height="2.500"/>
      <!-- history brush -->
      <path d="M28.500 286.500L30 288L22 297L20 295Z"/><path d="M19.500 295.500Q15.500 295.500 14 301Q19.500 301.500 22 297.500Z"/><path d="M14 291Q14 286 19.500 285.500" fill="none" stroke="#dedede" stroke-width="1.300"/><path d="M19 283.500L22 286L18.500 288Z"/>
      <!-- eraser -->
      <path d="M19 308H30L25.500 314H14.500Z"/><path d="M14.500 315H25.500V319.500H14.500ZM26.500 314.500L30 309.500V314L26.500 319Z" fill="#c8c8c8"/>
      <!-- paint bucket -->
      <path d="M14 335.500L20.500 330L26 336.500L19.500 342.500Q16 343.500 14 340.500Z" fill="#efefef"/><path d="M17.500 333Q16 328.500 19 328.200Q21.500 328.500 21.500 332" fill="none" stroke="#efefef" stroke-width="1.300"/><path d="M25.500 336Q28 337 27.500 342Q26.600 343.200 25.800 342Q26.500 338.500 24 337Z" fill="#efefef"/>
      <!-- blur drop -->
      <path d="M21 350Q26 357.500 25.300 360.500Q24.500 364 21 364Q17.500 364 16.700 360.500Q16 357.500 21 350Z"/>
      <!-- dodge -->
      <path d="M13.500 379Q13.500 373.500 20 373.500Q25 373.500 27 377L30.500 379V384.500H24Q22 386 19 386Q13.500 385.500 13.500 379Z"/><circle cx="19" cy="379.500" r="2.300" fill="#555"/>
      <!-- pen -->
      <path d="M25.500 394.500L30 399L27.500 401.500L23 397Z"/><path d="M22.500 397.500L27 402L22.500 408.500L14 411.500L17 403Z"/><path d="M14.500 411L20 405.500" stroke="#555" stroke-width="1"/><circle cx="20.500" cy="405" r="1.200" fill="#555"/>
      <!-- T -->
      <text x="15.300" y="431" font-family="Liberation Serif, serif" font-size="17" fill="#e0e0e0">T</text>
      <!-- path selection arrow -->
      <path d="M18 441.500V453.500L20.800 451L22.700 455.500L24.600 454.600L22.700 450.200H26.500Z" fill="#2e2e2e" stroke="#e2e2e2" stroke-width="1.200" stroke-linejoin="round"/>
      <!-- hexagon -->
      <path d="M13 470L17 463.500H25L29 470L25 476.500H17Z" fill="#c9c9c9" stroke="#e8e8e8" stroke-width="1"/>
      <!-- hand -->
      <path d="M16 494V489.500Q16 488.300 17.200 488.300Q18.300 488.300 18.300 489.500V487.300Q18.300 486 19.500 486Q20.700 486 20.700 487.300V486.800Q20.700 485.500 22 485.500Q23.200 485.500 23.200 486.800V488Q23.200 487 24.400 487Q25.600 487 25.600 488.200V493L27.500 490.500Q28.500 489.500 29.500 490.300Q30 491 29.500 492L26 499Q24.500 502 21.500 502H20Q17 502 16 499Z"/>
      <!-- zoom -->
      <circle cx="19" cy="512.500" r="4.800" fill="#8a8a8a" stroke="#dedede" stroke-width="1.600"/><path d="M22.500 516.500L28 522.500" stroke="#dedede" stroke-width="2.600" stroke-linecap="round"/>
      <!-- default colors / swap -->
      <rect x="13.500" y="532.500" width="5" height="5" fill="#111" stroke="#e6e6e6" stroke-width="1"/><rect x="10.500" y="529.500" width="5" height="5" fill="#e6e6e6" stroke="#333" stroke-width=".6"/>
      <path d="M25 531H29.500V535.500" fill="none" stroke="#dedede" stroke-width="1.300"/><path d="M23 531L26 528.500V533.500ZM29.500 538L27 535H32Z"/>
      <!-- quick mask -->
      <rect x="13.500" y="575.500" width="15" height="11" fill="#3c3c3c" stroke="#dcdcdc" stroke-width="1.100"/><circle cx="21" cy="581" r="3.200" fill="none" stroke="#dcdcdc" stroke-width="1" stroke-dasharray="1.500 1"/>
      <!-- screen mode -->
      <rect x="13.500" y="600.500" width="11" height="8" fill="#777" stroke="#dcdcdc" stroke-width="1.100"/><rect x="17.500" y="597.500" width="11" height="8" fill="#8c8c8c" stroke="#dcdcdc" stroke-width="1.100"/>
    </g>
  </svg>
  <!-- fg/bg swatches -->
  <div class="a" style="left:17px;top:551px;width:16px;height:16px;background:#000;border:1px solid #e6e6e6"></div>
  <div class="a" style="left:9px;top:543px;width:16px;height:16px;background:#fff;border:1px solid #fff;box-shadow:0 0 0 1px #444"></div>
  <!-- red boxes -->
  <div class="a" style="left:5px;top:320px;width:36px;height:29px;border:2px solid #e3232d"></div>
  <div class="a" style="left:5px;top:541px;width:36px;height:31px;border:2px solid #e3232d"></div>
<div class="a" style="left:5px;top:619px;width:864px;height:1px;background:#2a2a2a"></div>
<!--MAIN-->
</div></div>
</body></html>
